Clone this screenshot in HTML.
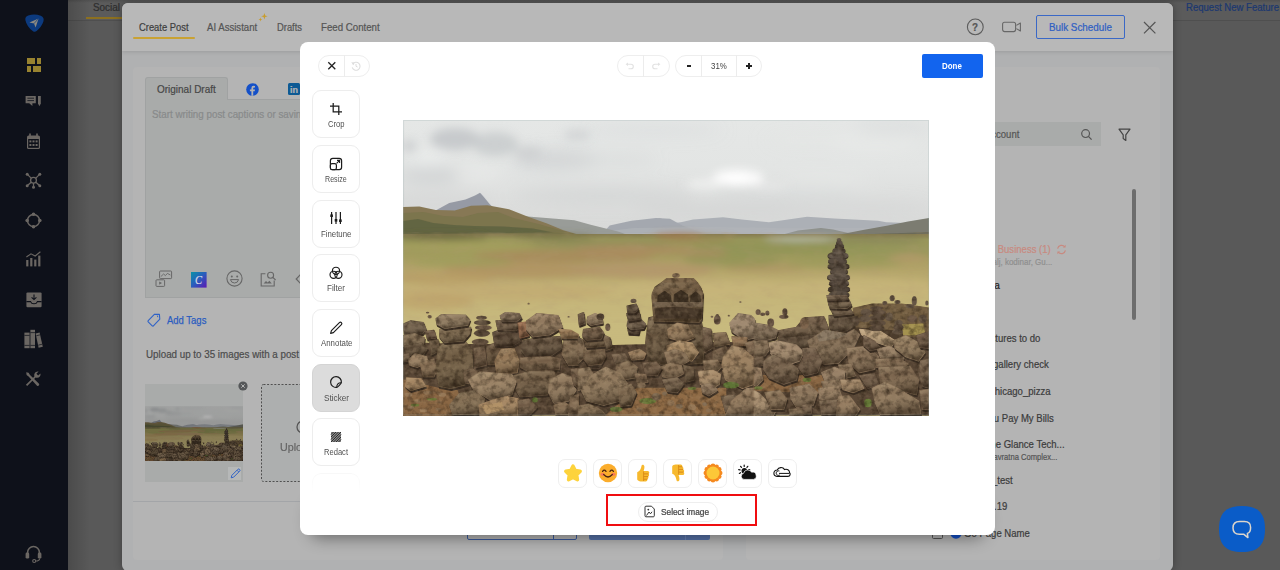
<!DOCTYPE html>
<html lang="en"><head><meta charset="utf-8"><title>Create Post</title>
<style>
*{box-sizing:border-box}
html,body{margin:0;padding:0}
body{width:1280px;height:570px;overflow:hidden;position:relative;background:#595959;font-family:"Liberation Sans",sans-serif}
.a{position:absolute}
.t{position:absolute;white-space:pre;transform-origin:0 50%;display:block;-webkit-text-stroke:.22px currentColor}
svg{position:absolute;overflow:visible}
#side{left:0;top:0;width:68px;height:570px;background:#0e111a}
#sideshadow{left:68px;top:0;width:22px;height:570px;background:linear-gradient(90deg,rgba(0,0,0,.16),rgba(0,0,0,0))}
#topbar{left:68px;top:0;width:1212px;height:21px;background:linear-gradient(#505050,#5b5b5b 3px);border-bottom:1px solid #4f4f4f}
#modal{left:122px;top:3px;width:1051px;height:567.5px;background:#b0b1b2;border-radius:6px;overflow:hidden;box-shadow:0 0 8px rgba(0,0,0,.3)}
#mhead{left:0;top:0;width:1051px;height:48px;background:#b8b8b8;box-shadow:0 1px 4px rgba(0,0,0,.12)}
.card{background:#b4b4b4;border-radius:4px}
#ed{left:300px;top:42px;width:695px;height:493px;background:#fff;border-radius:8px;}
.pill{border:1px solid #eee;border-radius:11px;height:22px;top:55px}
.tool{left:312px;width:48px;height:48px;border:1px solid #ededed;border-radius:9px;background:#fff}
.stk{top:459px;width:29px;height:29px;border:1px solid #efefef;border-radius:7px;background:#fff}
</style></head>
<body>
<div class="a" id="topbar"></div>
<div class="a" id="sideshadow"></div>
<span class="t" style="left:92.8px;top:0.9px;font-size:10.2px;line-height:14px;color:#2e2e2e;transform:scaleX(0.973);">Social</span>
<div class="a" style="left:86px;top:16.5px;width:40px;height:2.8px;background:#8c7020"></div>
<span class="t" style="left:1185.5px;top:1.4px;font-size:10px;line-height:14px;color:#1b3870;transform:scaleX(0.956);">Request New Feature</span>
<div class="a" id="side"></div>
<svg style="left:24px;top:14px" width="21" height="19" viewBox="0 0 21 19"><path d="M4.2 1.6Q10.4 -0.6 16.8 1.8Q20.6 3.4 19.4 7.6Q17.6 13 12.6 17Q10.8 18.4 9 17.2Q3 13 1.4 6.2Q0.8 2.8 4.2 1.6Z" fill="#0c3a7e"/><path d="M5.4 8.4L14.6 4.4L11.6 13.4L10 9.6Z" fill="#8d8a82"/><path d="M10 9.6L14.6 4.4" stroke="#0c3a7e" stroke-width=".7"/></svg>
<div class="a" style="left:26.5px;top:58px;width:8.6px;height:5.8px;background:#988330"></div><div class="a" style="left:37px;top:58px;width:4px;height:5.8px;background:#988330"></div><div class="a" style="left:26.5px;top:66.2px;width:4px;height:6.2px;background:#988330"></div><div class="a" style="left:32.6px;top:66.2px;width:8.4px;height:6.2px;background:#988330"></div>
<svg style="left:25px;top:95px" width="17" height="12" viewBox="0 0 17 12"><path d="M.6 1H10.8V8.2H7.4V11L4.2 8.2H.6Z" fill="#6b6763"/><path d="M2.4 3.2H9M2.4 5.6H9" stroke="#0e111a" stroke-width=".8"/><path d="M13 1H15.8V8.6L14.4 11.2L13 8.6Z" fill="#6b6763"/></svg>
<svg style="left:26px;top:133px" width="15" height="17" viewBox="0 0 15 17"><rect x="1" y="2.6" width="13" height="13.4" rx="1.6" fill="#6b6763"/><path d="M4 .6V3.4M11 .6V3.4" stroke="#6b6763" stroke-width="1.6"/><rect x="2.2" y="6" width="10.6" height="8.8" fill="#0e111a"/><g fill="#6b6763"><rect x="3.4" y="7.4" width="2" height="2"/><rect x="6.5" y="7.4" width="2" height="2"/><rect x="9.6" y="7.4" width="2" height="2"/><rect x="3.4" y="11" width="2" height="2"/><rect x="6.5" y="11" width="2" height="2"/><rect x="9.6" y="11" width="2" height="2"/></g></svg>
<svg style="left:25px;top:172px" width="17" height="17" viewBox="0 0 17 17"><g stroke="#6b6763" stroke-width="1.3" fill="none"><path d="M2.4 2.4L6.4 6.4M14.6 2.4L10.6 6.4M2.4 13.6L6.2 10.2M14.6 13.6L10.8 10.2M8.5 11V15"/><circle cx="8.5" cy="8.2" r="2.9"/></g><g fill="#6b6763"><circle cx="2.2" cy="2.2" r="1.5"/><circle cx="14.8" cy="2.2" r="1.5"/><circle cx="2.2" cy="13.8" r="1.5"/><circle cx="14.8" cy="13.8" r="1.5"/><circle cx="8.5" cy="15.2" r="1.5"/></g></svg>
<svg style="left:25px;top:211.5px" width="17" height="17" viewBox="0 0 17 17"><circle cx="8.5" cy="8.5" r="6" fill="none" stroke="#6b6763" stroke-width="1.5"/><g fill="#6b6763"><circle cx="8.5" cy="2.2" r="1.8"/><circle cx="8.5" cy="14.8" r="1.8"/><circle cx="2.2" cy="8.5" r="1.8"/><circle cx="14.8" cy="8.5" r="1.8"/></g></svg>
<svg style="left:25px;top:251px" width="17" height="16" viewBox="0 0 17 16"><g fill="#6b6763"><rect x="1.2" y="9" width="2.2" height="6.4"/><rect x="5.2" y="7" width="2.2" height="8.4"/><rect x="9.2" y="8.6" width="2.2" height="6.8"/><rect x="13.2" y="4.6" width="2.2" height="10.8"/></g><path d="M1.4 6L6 2.8L10.2 5L15.4 .8" fill="none" stroke="#6b6763" stroke-width="1.1"/></svg>
<svg style="left:25.5px;top:291.5px" width="16" height="16" viewBox="0 0 16 16"><rect x=".4" y=".4" width="15.2" height="14.8" rx="1.2" fill="#6b6763"/><path d="M8 2.4V7.4M5.6 5.4L8 7.6L10.4 5.4" stroke="#0e111a" stroke-width="1.1" fill="none"/><path d="M.4 9.6H4.6Q5.4 11.8 8 11.8Q10.6 11.8 11.4 9.6H15.6" stroke="#0e111a" stroke-width="1.1" fill="none"/></svg>
<svg style="left:23.5px;top:328.5px" width="19" height="20" viewBox="0 0 19 20"><g fill="#6b6763"><rect x=".4" y="3.6" width="5.2" height="15.6"/><rect x="6.4" y=".8" width="4.6" height="18.4"/><path d="M11.6 4.4L15.6 3.4L18.8 17.8L14.6 18.8Z"/></g><g stroke="#0e111a" stroke-width=".7"><path d="M.4 6.4H5.6M.4 16.4H5.6M6.4 3.6H11M6.4 16.4H11M12.2 6.8L16.2 5.8M14.2 16.2L18.2 15.2"/></g></svg>
<svg style="left:25px;top:370.5px" width="16" height="16" viewBox="0 0 16 16"><path d="M2.2 15L.9 13.7L9.4 5.4Q8.6 2.4 11 .9Q12.4 .2 13.6 .6L11.4 2.8L13.2 4.6L15.4 2.4Q15.8 3.8 15 5.2Q13.4 7.4 10.6 6.6Z" fill="#6b6763"/><path d="M1.2 1.2L3.6 1.8L5 4L13.8 12.4Q14.8 13.6 13.8 14.6Q12.8 15.4 11.8 14.4L3.6 5.4L1.6 4Z" fill="#6b6763"/></svg>
<svg style="left:25px;top:545px" width="17" height="18" viewBox="0 0 17 18"><path d="M2.6 10V7.4A5.9 5.9 0 0 1 14.4 7.4V10" fill="none" stroke="#6b6763" stroke-width="1.5"/><rect x=".6" y="7.6" width="3.6" height="6" rx="1.4" fill="#6b6763"/><rect x="12.8" y="7.6" width="3.6" height="6" rx="1.4" fill="#6b6763"/><path d="M14.6 13.4Q14.6 16 10.4 16" fill="none" stroke="#6b6763" stroke-width="1.1"/><circle cx="9.2" cy="16" r="1.5" fill="none" stroke="#6b6763" stroke-width="1.1"/></svg>
<div class="a" id="modal">
<div class="a" id="mhead"></div>
<div class="a card" style="left:11px;top:64px;width:590px;height:493px"></div>
<div class="a card" style="left:624px;top:64px;width:414px;height:493px"></div>
</div>
<span class="t" style="left:139.3px;top:19.5px;font-size:10.6px;line-height:15px;color:#3e3e3e;transform:scaleX(0.885);">Create Post</span>
<div class="a" style="left:133px;top:36.5px;width:62px;height:2.5px;border-radius:2px;background:#c9a233"></div>
<span class="t" style="left:207.3px;top:19.5px;font-size:10.6px;line-height:15px;color:#555;transform:scaleX(0.907);">AI Assistant</span>
<span class="t" style="left:276.8px;top:19.5px;font-size:10.6px;line-height:15px;color:#555;transform:scaleX(0.884);">Drafts</span>
<span class="t" style="left:320.8px;top:19.5px;font-size:10.6px;line-height:15px;color:#555;transform:scaleX(0.914);">Feed Content</span>
<svg style="left:966px;top:18px" width="18" height="18" viewBox="0 0 18 18"><circle cx="9.3" cy="8.9" r="7.9" fill="none" stroke="#5c5c5c" stroke-width="1.1"/></svg>
<span class="t" style="left:972.4px;top:19.7px;font-size:10.5px;line-height:15px;color:#555;font-weight:700;transform:scaleX(0.934);">?</span>
<svg style="left:1001px;top:20px" width="22" height="14" viewBox="0 0 22 14"><rect x="1.6" y="2.2" width="13" height="9.4" rx="2" fill="none" stroke="#676767" stroke-width="1.1"/><path d="M15.4 5.4L19.4 3V11L15.4 8.6" fill="none" stroke="#676767" stroke-width="1.1" stroke-linejoin="round"/></svg>
<div class="a" style="left:1036px;top:14.6px;width:89px;height:24.4px;border:1.3px solid #3a68c6;border-radius:2px"></div>
<span class="t" style="left:1048.9px;top:19.9px;font-size:10.8px;line-height:15px;color:#2f5fc3;transform:scaleX(0.911);">Bulk Schedule</span>
<svg style="left:1143px;top:21px" width="13" height="13" viewBox="0 0 13 13"><path d="M1 1L12.4 12.4M12.4 1L1 12.4" stroke="#555" stroke-width="1.2" fill="none"/></svg>
<svg style="left:258px;top:12px" width="10" height="10" viewBox="0 0 10 10"><path d="M6.4 1L7.2 3.4L9.6 4.2L7.2 5L6.4 7.4L5.6 5L3.2 4.2L5.6 3.4Z" fill="#c99d2b"/><path d="M2.4 5.6L2.9 7L4.3 7.5L2.9 8L2.4 9.4L1.9 8L.5 7.5L1.9 7Z" fill="#c99d2b"/></svg>
<div class="a" style="left:145px;top:99px;width:160px;height:198.5px;background:#a9abaa;border:1px solid #a0a2a2"></div>
<div class="a" style="left:145px;top:77px;width:83px;height:23px;background:#a9abaa;border:1px solid #a0a2a2;border-bottom:none;border-radius:3px 3px 0 0"></div>
<span class="t" style="left:157.2px;top:82.0px;font-size:10.8px;line-height:15px;color:#474747;transform:scaleX(0.924);">Original Draft</span>
<svg style="left:245.5px;top:82.5px" width="13" height="13" viewBox="0 0 13 13"><circle cx="6.5" cy="6.5" r="6.3" fill="#1450c8"/><path d="M7.2 12.7V8.2H8.7L9 6.4H7.2V5.3Q7.2 4.4 8.2 4.4H9V2.9Q8.4 2.8 7.6 2.8Q5.4 2.8 5.4 5V6.4H3.9V8.2H5.4V12.7Z" fill="#b4b4b4"/></svg>
<div class="a" style="left:288.3px;top:82.8px;width:12px;height:12px;background:#0d5a94;border-radius:1.5px"></div>
<span class="t" style="left:290.3px;top:82.8px;font-size:9.5px;line-height:13px;color:#b4b4b4;font-weight:700;transform:scaleX(0.946);">in</span>
<span class="t" style="left:152.0px;top:106.5px;font-size:10.8px;line-height:15px;color:#888a8a;transform:scaleX(0.908);">Start writing post captions or saving</span>
<svg style="left:155px;top:269.5px" width="18" height="18" viewBox="0 0 18 18"><rect x="4.6" y="1" width="12" height="7.6" rx=".8" fill="#a9abaa" stroke="#676767" stroke-width="1"/><path d="M5.8 6.6L8.6 4L10.4 5.6L12.4 3.4L15.4 5" fill="none" stroke="#676767" stroke-width=".9"/><rect x="1" y="9.8" width="8.6" height="6.6" rx=".8" fill="#a9abaa" stroke="#676767" stroke-width="1"/><path d="M4.2 11.4V14.8L7 13.1Z" fill="#676767"/></svg>
<svg style="left:191px;top:272px" width="16" height="16" viewBox="0 0 16 16"><defs><linearGradient id="cv" x1="0" y1="0" x2="1" y2="1"><stop offset="0" stop-color="#0a93a8"/><stop offset=".5" stop-color="#2b5bbd"/><stop offset="1" stop-color="#5c17b4"/></linearGradient></defs><rect width="15.6" height="15.6" fill="url(#cv)"/></svg>
<span class="t" style="left:195.2px;top:272.2px;font-size:11.5px;line-height:16px;color:#d8d8e4;transform:scaleX(0.914);font-style:italic;font-family:'Liberation Serif',serif;">C</span>
<svg style="left:225.5px;top:270.2px" width="17" height="17" viewBox="0 0 17 17"><circle cx="8.5" cy="8.5" r="7.6" fill="none" stroke="#676767" stroke-width="1.1"/><circle cx="5.8" cy="6.6" r="1" fill="#676767"/><circle cx="11.2" cy="6.6" r="1" fill="#676767"/><path d="M4.4 9.6H12.6Q11.8 13 8.5 13Q5.2 13 4.4 9.6Z" fill="none" stroke="#676767" stroke-width="1"/></svg>
<svg style="left:260px;top:270.5px" width="17" height="16" viewBox="0 0 17 16"><path d="M5.4 2.8H1.2V15H14.2V9.4" fill="none" stroke="#676767" stroke-width="1.1"/><circle cx="10.6" cy="4.2" r="3" fill="none" stroke="#676767" stroke-width="1.1"/><path d="M12.8 6.4L15.6 9" stroke="#676767" stroke-width="1.2"/><path d="M3.6 12.6L6 10L7.6 11.6L9.4 9.8L11.8 12.6Z" fill="#676767"/></svg>
<svg style="left:294px;top:273px" width="8" height="12" viewBox="0 0 8 12"><path d="M6.4 1.6L2.2 6L6.4 10.4" fill="none" stroke="#676767" stroke-width="1.2"/></svg>
<svg style="left:147px;top:313px" width="14" height="14" viewBox="0 0 14 14"><path d="M7.6 1.2L12.4 1.4L12.8 6.2L6.4 12.8Q5.8 13.4 5.2 12.8L1.2 8.8Q.6 8.2 1.2 7.6Z" fill="none" stroke="#2f62c6" stroke-width="1.1" stroke-linejoin="round"/><path d="M10.4 2.6L10.8 4.2" stroke="#2f62c6" stroke-width="1"/></svg>
<span class="t" style="left:166.6px;top:312.0px;font-size:11.4px;line-height:16px;color:#2a5cc0;transform:scaleX(0.833);-webkit-text-stroke:.25px #2a5cc0;">Add Tags</span>
<span class="t" style="left:145.6px;top:346.5px;font-size:10.8px;line-height:15px;color:#4c4c4c;transform:scaleX(0.907);">Upload up to 35 images with a post</span>
<div class="a" style="left:145px;top:384.4px;width:98.3px;height:98px;background:#a9abaa"></div>
<svg style="left:145px;top:406px;overflow:hidden" width="98.3" height="55.3" viewBox="0 0 526 295.4"><use href="#photoG"/><rect width="526" height="296" fill="#000" opacity=".3"/></svg>
<svg style="left:237.8px;top:380.5px" width="10" height="10" viewBox="0 0 10 10"><circle cx="5" cy="5" r="4.6" fill="#555759"/><path d="M3.3 3.3L6.7 6.7M6.7 3.3L3.3 6.7" stroke="#b4b4b4" stroke-width="1"/></svg>
<div class="a" style="left:228.4px;top:467px;width:12.8px;height:12.6px;background:#b6b8b8"></div>
<svg style="left:229.6px;top:468px" width="11" height="11" viewBox="0 0 11 11"><path d="M1.2 9.8L1.8 7.4L7.8 1.4A1.1 1.1 0 0 1 9.6 3.2L3.6 9.2Z" fill="none" stroke="#2f62c6" stroke-width="1" stroke-linejoin="round"/><path d="M7 2.2L8.8 4" stroke="#2f62c6" stroke-width=".9"/></svg>
<svg style="left:261.3px;top:384.4px" width="60" height="98" viewBox="0 0 60 98"><rect x=".5" y=".5" width="70" height="97" rx="2" fill="#adafaf" stroke="#505050" stroke-width="1" stroke-dasharray="2 1.6"/></svg>
<span class="t" style="left:280.4px;top:439.8px;font-size:11.2px;line-height:15px;color:#666;transform:scaleX(0.959);">Upload</span>
<svg style="left:295px;top:420px" width="14" height="14" viewBox="0 0 14 14"><circle cx="8" cy="7" r="6" fill="none" stroke="#555" stroke-width="1.3"/></svg>
<div class="a" style="left:133px;top:500.5px;width:589px;height:1.5px;background:#a3a5a8"></div>
<div class="a" style="left:467.4px;top:515px;width:109.4px;height:24.6px;border:1.2px solid #3d5c9c;border-radius:2px"></div><div class="a" style="left:553px;top:515px;width:1.2px;height:24px;background:#3d5c9c"></div>
<div class="a" style="left:589.3px;top:515px;width:121px;height:24.6px;background:#5672a8;border-radius:2px"></div><div class="a" style="left:684.6px;top:515px;width:1px;height:24.6px;background:#6a84b6"></div>
<div class="a" style="left:900px;top:122.3px;width:200.7px;height:23.7px;background:#a9abaa"></div>
<span class="t" style="left:952.9px;top:126.8px;font-size:10.8px;line-height:15px;color:#555;transform:scaleX(0.885);">Search account</span>
<svg style="left:1079.5px;top:128px" width="13" height="13" viewBox="0 0 13 13"><circle cx="5.6" cy="5.6" r="3.9" fill="none" stroke="#555" stroke-width="1.2"/><path d="M8.4 8.4L11.6 11.6" stroke="#555" stroke-width="1.3"/></svg>
<svg style="left:1118px;top:127.5px" width="13" height="14" viewBox="0 0 13 14"><path d="M1 1.2H12L7.8 6.8V12.4L5.2 10.6V6.8Z" fill="none" stroke="#444" stroke-width="1.2" stroke-linejoin="round"/></svg>
<div class="a" style="left:1132.3px;top:189.3px;width:3.8px;height:130.4px;border-radius:2px;background:#6d6d6d"></div>
<span class="t" style="left:952.4px;top:241.8px;font-size:10.8px;line-height:15px;color:#c88a80;transform:scaleX(0.885);">My Listing Business (1)</span>
<svg style="left:1056.2px;top:243.6px" width="11" height="11" viewBox="0 0 11 11"><path d="M1.6 4.6A4 4 0 0 1 8.8 3M9.4 6.4A4 4 0 0 1 2.2 8" fill="none" stroke="#c88a80" stroke-width="1.2"/><path d="M9.6 .8V3.6H6.8ZM1.4 10.2V7.4H4.2Z" fill="#c88a80"/></svg>
<span class="t" style="left:881.0px;top:255.8px;font-size:9px;line-height:13px;color:#8f8f8f;transform:scaleX(0.885);">Unnamed Road, Rampara, Devalj, kodinar, Gu...</span>
<span class="t" style="left:979.3px;top:277.5px;font-size:10.8px;line-height:15px;color:#222;transform:scaleX(0.885);">India</span>
<span class="t" style="left:981.8px;top:330.7px;font-size:10.8px;line-height:15px;color:#3c3c3c;transform:scaleX(0.885);">Pictures to do</span>
<span class="t" style="left:992.5px;top:356.9px;font-size:10.8px;line-height:15px;color:#3c3c3c;transform:scaleX(0.885);">gallery check</span>
<span class="t" style="left:990.4px;top:383.9px;font-size:10.8px;line-height:15px;color:#3c3c3c;transform:scaleX(0.885);">chicago_pizza</span>
<span class="t" style="left:983.2px;top:410.5px;font-size:10.8px;line-height:15px;color:#3c3c3c;transform:scaleX(0.885);">You Pay My Bills</span>
<span class="t" style="left:972.9px;top:436.7px;font-size:10.8px;line-height:15px;color:#3c3c3c;transform:scaleX(0.885);">At The Glance Tech...</span>
<span class="t" style="left:984.1px;top:472.5px;font-size:10.8px;line-height:15px;color:#3c3c3c;transform:scaleX(0.885);">fb_test</span>
<span class="t" style="left:984.1px;top:498.9px;font-size:10.8px;line-height:15px;color:#3c3c3c;transform:scaleX(0.885);">v1.19</span>
<span class="t" style="left:987.7px;top:451.2px;font-size:8.6px;line-height:12px;color:#555;transform:scaleX(0.885);">Navratna Complex...</span>
<div class="a" style="left:931.5px;top:527.5px;width:11.5px;height:11.5px;border:1.2px solid #555;border-radius:1.5px"></div>
<svg style="left:949.5px;top:527px" width="12" height="12" viewBox="0 0 12 12"><circle cx="6" cy="6" r="5.8" fill="#1450c8"/></svg>
<span class="t" style="left:964.4px;top:525.5px;font-size:10.8px;line-height:15px;color:#3c3c3c;transform:scaleX(0.885);">Go Page Name</span>
<div class="a" style="left:312px;top:495px;width:671px;height:32px;border-radius:8px;box-shadow:0 9px 16px 2px rgba(0,0,0,.42)"></div>
<div class="a" id="ed"></div>
<div class="a pill" style="left:318px;width:52px"></div><div class="a" style="left:344px;top:55px;width:1px;height:22px;background:#ececec"></div>
<svg style="left:326px;top:60px" width="12" height="12" viewBox="0 0 12 12"><path d="M2.3 2.3L9.3 9.3M9.3 2.3L2.3 9.3" stroke="#222" stroke-width="1.3" fill="none"/></svg>
<svg style="left:350px;top:60px" width="12" height="12" viewBox="0 0 12 12"><path d="M2.6 4.2A4 4 0 1 1 2.2 7.4" stroke="#ddd" stroke-width="1.1" fill="none"/><path d="M1.2 2.2L3.6 5.2L4.6 2.6Z" fill="#ddd"/><path d="M6 4V6.3L7.6 7" stroke="#ddd" stroke-width="1" fill="none"/></svg>
<div class="a pill" style="left:617px;width:53px"></div><div class="a" style="left:642.5px;top:55px;width:1px;height:22px;background:#ececec"></div>
<svg style="left:624px;top:60px" width="12" height="12" viewBox="0 0 12 12"><path d="M3 4.2H7A2.3 2.3 0 0 1 7 8.8H4.5" stroke="#e2e2e2" stroke-width="1.1" fill="none"/><path d="M1.6 4.2L4 2.4V6Z" fill="#e2e2e2"/></svg>
<svg style="left:650px;top:60px" width="12" height="12" viewBox="0 0 12 12"><path d="M9 4.2H5A2.3 2.3 0 0 0 5 8.8H7.5" stroke="#e2e2e2" stroke-width="1.1" fill="none"/><path d="M10.4 4.2L8 2.4V6Z" fill="#e2e2e2"/></svg>
<div class="a pill" style="left:675px;width:87px"></div><div class="a" style="left:701px;top:55px;width:1px;height:22px;background:#ececec"></div><div class="a" style="left:736px;top:55px;width:1px;height:22px;background:#ececec"></div>
<div class="a" style="left:686.5px;top:65px;width:4.5px;height:1.8px;background:#222"></div>
<div class="a" style="left:746px;top:65.2px;width:6px;height:1.6px;background:#222"></div><div class="a" style="left:748.2px;top:63px;width:1.6px;height:6px;background:#222"></div>
<span class="t" style="left:711.0px;top:60.2px;font-size:9.2px;line-height:13px;color:#444;transform:scaleX(0.859);-webkit-text-stroke:0;">31%</span>
<div class="a" style="left:922px;top:54px;width:61px;height:24px;border-radius:2px;background:#1264ee"></div>
<span class="t" style="left:942.3px;top:60.0px;font-size:9.3px;line-height:13px;color:#fff;font-weight:700;transform:scaleX(0.852);-webkit-text-stroke:0;">Done</span>
<div class="a tool" style="top:90.3px"></div>
<span class="t" style="left:328.1px;top:119.4px;font-size:8.2px;line-height:12px;color:#505050;transform:scaleX(0.930);-webkit-text-stroke:0;">Crop</span>
<div class="a tool" style="top:145.0px"></div>
<span class="t" style="left:325.4px;top:174.1px;font-size:8.2px;line-height:12px;color:#505050;transform:scaleX(0.867);-webkit-text-stroke:0;">Resize</span>
<div class="a tool" style="top:199.7px"></div>
<span class="t" style="left:321.1px;top:228.8px;font-size:8.2px;line-height:12px;color:#505050;transform:scaleX(0.954);-webkit-text-stroke:0;">Finetune</span>
<div class="a tool" style="top:254.3px"></div>
<span class="t" style="left:327.3px;top:283.4px;font-size:8.2px;line-height:12px;color:#505050;transform:scaleX(0.989);-webkit-text-stroke:0;">Filter</span>
<div class="a tool" style="top:309.0px"></div>
<span class="t" style="left:320.6px;top:338.1px;font-size:8.2px;line-height:12px;color:#505050;transform:scaleX(0.961);-webkit-text-stroke:0;">Annotate</span>
<div class="a tool" style="top:363.7px;background:#dcdcdc;border-color:#d4d4d4"></div>
<span class="t" style="left:323.8px;top:392.8px;font-size:8.2px;line-height:12px;color:#505050;transform:scaleX(0.999);-webkit-text-stroke:0;">Sticker</span>
<div class="a tool" style="top:418.3px"></div>
<span class="t" style="left:324.3px;top:447.4px;font-size:8.2px;line-height:12px;color:#505050;transform:scaleX(0.925);-webkit-text-stroke:0;">Redact</span>
<div class="a tool" style="top:473px;border-color:#f8f8f8;-webkit-mask-image:linear-gradient(#000,transparent 40%);mask-image:linear-gradient(#000,transparent 40%)"></div>
<svg style="left:329.2px;top:102.0px" width="14" height="14" viewBox="0 0 14 14"><path d="M4.2 1V9.8H13M1 4.2H9.8V13" fill="none" stroke="#1c1c1c" stroke-width="1.25"/></svg>
<svg style="left:329.2px;top:156.7px" width="14" height="14" viewBox="0 0 14 14"><rect x="1.4" y="1.4" width="11.2" height="11.2" rx="2.4" fill="none" stroke="#1c1c1c" stroke-width="1.2"/><rect x="1.4" y="6.6" width="6" height="6" rx="1.6" fill="#fff" stroke="#1c1c1c" stroke-width="1.2"/><path d="M7.6 6.4L10.4 3.6M8 3.4H10.6V6" fill="none" stroke="#1c1c1c" stroke-width="1.1"/></svg>
<svg style="left:329.2px;top:211.4px" width="14" height="14" viewBox="0 0 14 14"><path d="M2.6 1V13M7 1V13M11.4 1V13" stroke="#1c1c1c" stroke-width="1.2"/><rect x="1.3" y="3.4" width="2.6" height="2.6" fill="#1c1c1c"/><rect x="5.7" y="8" width="2.6" height="2.6" fill="#1c1c1c"/><rect x="10.1" y="8.4" width="2.6" height="2.6" fill="#1c1c1c"/></svg>
<svg style="left:329.2px;top:266.0px" width="14" height="14" viewBox="0 0 14 14"><circle cx="7" cy="4.8" r="3.6" fill="none" stroke="#1c1c1c" stroke-width="1.15"/><circle cx="4.6" cy="8.8" r="3.6" fill="none" stroke="#1c1c1c" stroke-width="1.15"/><circle cx="9.4" cy="8.8" r="3.6" fill="none" stroke="#1c1c1c" stroke-width="1.15"/></svg>
<svg style="left:329.2px;top:320.7px" width="14" height="14" viewBox="0 0 14 14"><path d="M1.6 12.4L2.4 9.6L10.4 1.6A1.3 1.3 0 0 1 12.4 3.6L4.4 11.6Z" fill="none" stroke="#1c1c1c" stroke-width="1.15" stroke-linejoin="round"/></svg>
<svg style="left:329.2px;top:375.4px" width="14" height="14" viewBox="0 0 14 14"><path d="M12.4 7.6A5.4 5.4 0 1 0 7.6 12.4C8.4 12.4 12.4 8.6 12.4 7.6Z" fill="none" stroke="#1c1c1c" stroke-width="1.2"/><path d="M7.8 12.2C7.6 9.6 9.4 7.6 12.2 7.8" fill="none" stroke="#1c1c1c" stroke-width="1.1"/></svg>
<svg style="left:329.2px;top:430.0px" width="14" height="14" viewBox="0 0 14 14"><g transform="translate(2,2)"><rect width="10" height="10" fill="#888"/><path d="M2.5 0L0 2.5" stroke="#222" stroke-width=".9"/><path d="M5 0L0 5" stroke="#222" stroke-width=".9"/><path d="M7.5 0L0 7.5" stroke="#222" stroke-width=".9"/><path d="M10 0L0 10" stroke="#222" stroke-width=".9"/><path d="M10 2.5L2.5 10" stroke="#222" stroke-width=".9"/><path d="M10 5L5 10" stroke="#222" stroke-width=".9"/><path d="M10 7.5L7.5 10" stroke="#222" stroke-width=".9"/></g></svg>
<svg style="left:402.7px;top:120.3px;overflow:hidden" width="526" height="295.4" viewBox="0 0 526 295.4">
<defs>
<linearGradient id="sky" x1="0" y1="0" x2="0" y2="1"><stop offset="0" stop-color="#e5e7e6"/><stop offset=".4" stop-color="#e3e5e4"/><stop offset=".75" stop-color="#dcdddc"/><stop offset="1" stop-color="#d6d7d6"/></linearGradient>
<linearGradient id="gnd" x1="0" y1="0" x2="0" y2="1"><stop offset="0" stop-color="#857a50"/><stop offset=".03" stop-color="#98955a"/><stop offset=".12" stop-color="#a39c5e"/><stop offset=".2" stop-color="#b4a56a"/><stop offset=".3" stop-color="#c4b478"/><stop offset=".5" stop-color="#c8ba7e"/><stop offset="1" stop-color="#c6b87e"/></linearGradient>
<linearGradient id="shade" x1="0" y1="0" x2="0.25" y2="1"><stop offset="0" stop-color="#f0dcb4" stop-opacity=".3"/><stop offset=".4" stop-color="#f0dcb4" stop-opacity="0"/><stop offset="1" stop-color="#140c04" stop-opacity=".42"/></linearGradient>
<filter id="b1" x="-10%" y="-10%" width="120%" height="120%"><feGaussianBlur stdDeviation="1"/></filter>
<filter id="b3" x="-30%" y="-30%" width="160%" height="160%"><feGaussianBlur stdDeviation="3.5"/></filter>
<filter id="b5" x="-40%" y="-40%" width="180%" height="180%"><feGaussianBlur stdDeviation="5"/></filter>
<filter id="b8" x="-50%" y="-50%" width="200%" height="200%"><feGaussianBlur stdDeviation="8"/></filter>
<filter id="bs" x="-5%" y="-5%" width="110%" height="110%"><feGaussianBlur stdDeviation=".55"/></filter>
<filter id="rockfx" x="0" y="0" width="100%" height="100%" color-interpolation-filters="sRGB"><feGaussianBlur in="SourceGraphic" stdDeviation=".5" result="src"/><feTurbulence type="fractalNoise" baseFrequency=".16" numOctaves="3" seed="7" result="n1"/><feColorMatrix in="n1" values="0 0 0 0 .13  0 0 0 0 .09  0 0 0 0 .05  1.3 0 0 0 -.56" result="d"/><feComposite in="d" in2="src" operator="in" result="d2"/><feTurbulence type="fractalNoise" baseFrequency=".2" numOctaves="2" seed="21" result="n2"/><feColorMatrix in="n2" values="0 0 0 0 .74  0 0 0 0 .65  0 0 0 0 .52  0 .55 0 0 -.27" result="l"/><feComposite in="l" in2="src" operator="in" result="l2"/><feMerge><feMergeNode in="src"/><feMergeNode in="d2"/><feMergeNode in="l2"/></feMerge></filter>
<filter id="tex2" x="0" y="0" width="100%" height="100%"><feTurbulence type="fractalNoise" baseFrequency=".05 .12" numOctaves="3" seed="3"/><feColorMatrix values="0 0 0 0 .45  0 0 0 0 .32  0 0 0 0 .18  1.8 0 0 0 -.8"/></filter>
<clipPath id="rc"><polygon points="0,192 60,192 60,206 90,190 160,192 165,204 180,192 205,192 210,204 222,180 240,180 245,158 300,158 302,200 330,196 352,205 420,208 424,120 450,120 452,190 526,178 526,295.4 0,295.4"/></clipPath>
</defs>
<g id="photoG">
<rect width="526" height="118" fill="url(#sky)"/>
<g filter="url(#b8)"><ellipse cx="30" cy="55" rx="34" ry="9" fill="#cdd0d1" opacity="0.8"/><ellipse cx="152" cy="40" rx="44" ry="10" fill="#cfd2d3" opacity="0.8"/><ellipse cx="250" cy="10" rx="70" ry="5" fill="#d6d9da" opacity="0.6"/><ellipse cx="215" cy="40" rx="40" ry="6" fill="#d4d7d8" opacity="0.5"/><ellipse cx="26" cy="38" rx="20" ry="8" fill="#eceeed" opacity="0.9"/><ellipse cx="75" cy="53" rx="26" ry="7" fill="#e8eae9" opacity="0.8"/><ellipse cx="420" cy="58" rx="50" ry="7" fill="#e8e9e8" opacity="0.6"/><ellipse cx="470" cy="22" rx="45" ry="10" fill="#eaebea" opacity="0.6"/><ellipse cx="400" cy="20" rx="40" ry="8" fill="#e6e7e6" opacity="0.5"/><ellipse cx="30" cy="82" rx="60" ry="8" fill="#d4d6d6" opacity="0.7"/><ellipse cx="200" cy="76" rx="90" ry="9" fill="#d2d4d4" opacity="0.7"/><ellipse cx="330" cy="90" rx="100" ry="7" fill="#d0d2d2" opacity="0.7"/><ellipse cx="470" cy="88" rx="60" ry="7" fill="#d3d5d5" opacity="0.6"/><ellipse cx="490" cy="8" rx="40" ry="6" fill="#d6d9da" opacity="0.7"/><ellipse cx="380" cy="74" rx="70" ry="6" fill="#d6d8d8" opacity="0.6"/></g>
<g filter="url(#b5)"><ellipse cx="52" cy="19" rx="25" ry="11" fill="#c4c7ca" opacity="0.9"/><ellipse cx="92" cy="24" rx="23" ry="12" fill="#c8cbcd" opacity="0.85"/><ellipse cx="174" cy="15" rx="14" ry="6" fill="#cfd2d3" opacity="0.8"/><ellipse cx="6" cy="26" rx="8" ry="6" fill="#c8cbcd" opacity="0.8"/><ellipse cx="125" cy="33" rx="14" ry="7" fill="#cacdcf" opacity="0.7"/><ellipse cx="335" cy="58" rx="26" ry="8" fill="#fbfbfb" opacity="1"/><ellipse cx="330" cy="57" rx="16" ry="5" fill="#ffffff" opacity="0.9"/><ellipse cx="303" cy="64" rx="20" ry="5" fill="#f0f1f0" opacity="0.9"/><ellipse cx="366" cy="66" rx="20" ry="4" fill="#e9eae9" opacity="0.7"/></g>
<g filter="url(#bs)">
<polygon fill="#acb0b6" points="190.0,113.0 257.0,98.0 268.0,103.5 279.0,102.0 290.0,99.4 320.0,97.3 339.0,99.4 366.0,102.2 385.0,99.4 404.0,96.7 431.0,98.6 475.0,100.8 483.0,102.2 526.0,104.0 526.0,118.0 190.0,118.0"/>
<polygon fill="#a4a8af" points="200.0,113.0 206.6,105.6 228.4,100.7 252.9,98.0 267.0,98.8 280.0,106.0 300.0,113.0"/>
<polygon fill="#b3b6b9" opacity=".6" points="190.0,113.0 230.0,108.0 300.0,107.0 400.0,108.0 500.0,108.0 526.0,109.0 526.0,118.0 190.0,118.0"/>
<polygon fill="#969aa4" points="28.0,93.0 32.6,90.4 46.2,83.0 62.5,79.5 72.0,75.5 77.0,72.7 80.2,76.3 87.0,84.4 95.0,92.0 60.0,96.0"/>
<polygon fill="#999c98" points="120.0,96.0 127.8,96.7 149.5,98.6 171.3,100.2 187.6,104.8 214.8,111.6 222.0,114.0 120.0,116.0"/>
<polygon fill="#877855" points="0.0,87.1 16.3,86.6 32.6,89.9 51.7,90.4 68.0,85.8 84.3,85.2 106.0,89.3 125.0,96.7 144.0,103.4 160.4,110.2 175.0,114.5 0.0,115.5"/>
<polygon fill="#737248" opacity=".6" points="0.0,93.0 20.0,92.0 40.0,96.0 60.0,97.0 75.0,93.0 95.0,92.0 110.0,98.0 135.0,104.0 160.0,111.0 175.0,115.0 0.0,115.5"/>
<polygon fill="#5c6240" opacity=".8" points="0.0,101.0 15.0,99.0 30.0,103.0 50.0,105.0 70.0,106.0 100.0,106.5 130.0,108.5 150.0,112.5 0.0,114.0"/>
<polygon fill="#8e918c" points="380.0,114.5 395.0,110.5 417.8,108.0 430.0,109.5 445.0,113.0 445.0,116.0 380.0,116.0"/>
<polygon fill="#7b7c71" points="437.0,114.5 460.0,110.0 485.0,105.5 505.0,101.5 526.0,98.0 526.0,118.0 437.0,118.0"/>
<polygon fill="#6b6a58" points="430.0,115.5 526.0,112.0 526.0,119.0 430.0,119.0"/>
</g>
<rect y="114" width="526" height="182" fill="url(#gnd)"/>
<g filter="url(#b3)"><ellipse cx="40" cy="117.5" rx="45" ry="3" fill="#5e5a3a" opacity="0.8"/><ellipse cx="150" cy="117" rx="40" ry="2.5" fill="#6a6840" opacity="0.7"/><ellipse cx="275" cy="116" rx="24" ry="2.5" fill="#a87550" opacity="0.9"/><ellipse cx="300" cy="119" rx="30" ry="3" fill="#9a8352" opacity="0.7"/><ellipse cx="400" cy="118.5" rx="40" ry="1.6" fill="#c6cace" opacity="0.95"/><ellipse cx="392" cy="122" rx="14" ry="1" fill="#c0c4c8" opacity="0.8"/><ellipse cx="470" cy="120" rx="50" ry="2" fill="#6f6c58" opacity="0.6"/><ellipse cx="60" cy="126" rx="70" ry="5" fill="#a5a25e" opacity="0.7"/><ellipse cx="200" cy="124" rx="70" ry="4" fill="#8f8c58" opacity="0.7"/><ellipse cx="380" cy="128" rx="90" ry="7" fill="#8e9355" opacity="0.8"/><ellipse cx="480" cy="130" rx="50" ry="7" fill="#929558" opacity="0.7"/><ellipse cx="330" cy="140" rx="50" ry="6" fill="#8e9355" opacity="0.7"/><ellipse cx="440" cy="142" rx="60" ry="6" fill="#969858" opacity="0.6"/><ellipse cx="160" cy="136" rx="90" ry="6" fill="#a88a5c" opacity="0.85"/><ellipse cx="230" cy="130" rx="60" ry="5" fill="#ad8c60" opacity="0.8"/><ellipse cx="120" cy="150" rx="80" ry="8" fill="#b09262" opacity="0.8"/><ellipse cx="240" cy="150" rx="70" ry="8" fill="#b3966a" opacity="0.8"/><ellipse cx="60" cy="142" rx="50" ry="5" fill="#9a9c58" opacity="0.6"/><ellipse cx="40" cy="158" rx="50" ry="7" fill="#b89a64" opacity="0.6"/><ellipse cx="300" cy="133" rx="25" ry="4" fill="#a88d60" opacity="0.8"/><ellipse cx="360" cy="148" rx="40" ry="3" fill="#a88d60" opacity="0.6"/><ellipse cx="505" cy="138" rx="20" ry="5" fill="#b89a6c" opacity="0.6"/><ellipse cx="100" cy="172" rx="110" ry="9" fill="#c2aa72" opacity="0.7"/><ellipse cx="300" cy="170" rx="100" ry="10" fill="#c6b47a" opacity="0.6"/><ellipse cx="460" cy="168" rx="70" ry="10" fill="#c8b67c" opacity="0.6"/><ellipse cx="30" cy="182" rx="40" ry="8" fill="#bd9e68" opacity="0.6"/></g>
<rect y="112.5" width="526" height="90" filter="url(#tex2)" opacity=".25"/>
<g filter="url(#rockfx)">
<polygon fill="#5a4837" points="0,222 60,224 120,224 176,226 250,224 300,222 352,222 420,224 470,220 526,214 526,295.4 0,295.4"/>
<ellipse cx="436" cy="120.7" rx="2.2" ry="1.6" fill="#3a3027"/>
<ellipse cx="436" cy="119.5" rx="2.2" ry="1.6" fill="#62564a"/>
<ellipse cx="436.3" cy="123.7" rx="3.2" ry="1.8" fill="#3a3027"/>
<ellipse cx="436.3" cy="122.5" rx="3.2" ry="1.8" fill="#574b40"/>
<ellipse cx="436.5" cy="127.2" rx="4.5" ry="2.2" fill="#3a3027"/>
<ellipse cx="436.5" cy="126" rx="4.5" ry="2.2" fill="#4e4338"/>
<ellipse cx="436" cy="131.7" rx="6.5" ry="3" fill="#3a3027"/>
<ellipse cx="436" cy="130.5" rx="6.5" ry="3" fill="#5a4e42"/>
<ellipse cx="435" cy="136.7" rx="10.5" ry="3.8" fill="#3a3027"/>
<ellipse cx="435" cy="135.5" rx="10.5" ry="3.8" fill="#62564a"/>
<ellipse cx="434.5" cy="142.2" rx="9.5" ry="3.4" fill="#3a3027"/>
<ellipse cx="434.5" cy="141" rx="9.5" ry="3.4" fill="#574b40"/>
<ellipse cx="435.5" cy="147.2" rx="11" ry="3.6" fill="#3a3027"/>
<ellipse cx="435.5" cy="146" rx="11" ry="3.6" fill="#4e4338"/>
<ellipse cx="436" cy="152.7" rx="9" ry="3.4" fill="#3a3027"/>
<ellipse cx="436" cy="151.5" rx="9" ry="3.4" fill="#5a4e42"/>
<ellipse cx="435.5" cy="158.2" rx="11.5" ry="4" fill="#3a3027"/>
<ellipse cx="435.5" cy="157" rx="11.5" ry="4" fill="#62564a"/>
<ellipse cx="436" cy="164.2" rx="10" ry="3.8" fill="#3a3027"/>
<ellipse cx="436" cy="163" rx="10" ry="3.8" fill="#574b40"/>
<ellipse cx="436" cy="170.2" rx="11" ry="4" fill="#3a3027"/>
<ellipse cx="436" cy="169" rx="11" ry="4" fill="#4e4338"/>
<ellipse cx="436" cy="175.7" rx="10.5" ry="3.5" fill="#3a3027"/>
<ellipse cx="436" cy="174.5" rx="10.5" ry="3.5" fill="#5a4e42"/>
<g transform="translate(-0.7,175.7) scale(.2105)">
<polygon points="0,400 170,440 260,450 300,570 0,570" fill="#8a6744" stroke="#8a6744" stroke-width="6" stroke-linejoin="round"/>
<polygon points="8,144 43,129 103,137 115,169 98,189 13,191" fill="#3a2e23" stroke="#3a2e23" stroke-width="7" stroke-linejoin="round"/>
<polygon points="5,135 40,120 100,128 112,160 95,180 10,182" fill="#705f4c" stroke="#705f4c" stroke-width="6" stroke-linejoin="round"/>
<polygon points="5,135 40,120 100,128 112,160 95,180 10,182" fill="url(#shade)"/>
<polygon points="8,199 63,189 108,209 103,244 33,257 8,249" fill="#3a2e23" stroke="#3a2e23" stroke-width="7" stroke-linejoin="round"/>
<polygon points="5,190 60,180 105,200 100,235 30,248 5,240" fill="#7c6850" stroke="#7c6850" stroke-width="6" stroke-linejoin="round"/>
<polygon points="5,190 60,180 105,200 100,235 30,248 5,240" fill="url(#shade)"/>
<polygon points="13,249 93,234 123,259 103,289 23,294" fill="#3a2e23" stroke="#3a2e23" stroke-width="7" stroke-linejoin="round"/>
<polygon points="10,240 90,225 120,250 100,280 20,285" fill="#5d4c3a" stroke="#5d4c3a" stroke-width="6" stroke-linejoin="round"/>
<polygon points="10,240 90,225 120,250 100,280 20,285" fill="url(#shade)"/>
<polygon points="3,289 33,284 38,319 3,324" fill="#3a2e23" stroke="#3a2e23" stroke-width="7" stroke-linejoin="round"/>
<polygon points="0,280 30,275 35,310 0,315" fill="#6c5845" stroke="#6c5845" stroke-width="6" stroke-linejoin="round"/>
<polygon points="0,280 30,275 35,310 0,315" fill="url(#shade)"/>
<polygon points="33,314 63,284 118,299 128,329 73,349 38,339" fill="#3a2e23" stroke="#3a2e23" stroke-width="7" stroke-linejoin="round"/>
<polygon points="30,305 60,275 115,290 125,320 70,340 35,330" fill="#987f63" stroke="#987f63" stroke-width="6" stroke-linejoin="round"/>
<polygon points="30,305 60,275 115,290 125,320 70,340 35,330" fill="url(#shade)"/>
<polygon points="88,329 153,309 168,359 153,394 103,394" fill="#3a2e23" stroke="#3a2e23" stroke-width="7" stroke-linejoin="round"/>
<polygon points="85,320 150,300 165,350 150,385 100,385" fill="#846c52" stroke="#846c52" stroke-width="6" stroke-linejoin="round"/>
<polygon points="85,320 150,300 165,350 150,385 100,385" fill="url(#shade)"/>
<polygon points="23,399 93,404 113,439 43,459 18,439" fill="#3a2e23" stroke="#3a2e23" stroke-width="7" stroke-linejoin="round"/>
<polygon points="20,390 90,395 110,430 40,450 15,430" fill="#a0815e" stroke="#a0815e" stroke-width="6" stroke-linejoin="round"/>
<polygon points="20,390 90,395 110,430 40,450 15,430" fill="url(#shade)"/>
<polygon points="113,179 153,174 163,209 123,214" fill="#3a2e23" stroke="#3a2e23" stroke-width="7" stroke-linejoin="round"/>
<polygon points="110,170 150,165 160,200 120,205" fill="#6c5744" stroke="#6c5744" stroke-width="6" stroke-linejoin="round"/>
<polygon points="110,170 150,165 160,200 120,205" fill="url(#shade)"/>
<polygon points="133,224 173,219 178,269 143,289" fill="#3a2e23" stroke="#3a2e23" stroke-width="7" stroke-linejoin="round"/>
<polygon points="130,215 170,210 175,260 140,280" fill="#64523e" stroke="#64523e" stroke-width="6" stroke-linejoin="round"/>
<polygon points="130,215 170,210 175,260 140,280" fill="url(#shade)"/>
<polygon points="173,259 203,231 303,227 333,269 338,339 313,429 233,449 178,439 163,359" fill="#3a2e23" stroke="#3a2e23" stroke-width="7" stroke-linejoin="round"/>
<polygon points="170,250 200,222 300,218 330,260 335,330 310,420 230,440 175,430 160,350" fill="#6e5b43" stroke="#6e5b43" stroke-width="6" stroke-linejoin="round"/>
<polygon points="170,250 200,222 300,218 330,260 335,330 310,420 230,440 175,430 160,350" fill="url(#shade)"/>
<polygon points="181,169 328,159 323,189 293,224 203,231 181,204" fill="#3a2e23" stroke="#3a2e23" stroke-width="7" stroke-linejoin="round"/>
<polygon points="178,160 325,150 320,180 290,215 200,222 178,195" fill="#75624a" stroke="#75624a" stroke-width="6" stroke-linejoin="round"/>
<polygon points="178,160 325,150 320,180 290,215 200,222 178,195" fill="url(#shade)"/>
<polygon points="163,119 188,99 303,101 323,124 313,149 203,164 168,144" fill="#3a2e23" stroke="#3a2e23" stroke-width="7" stroke-linejoin="round"/>
<polygon points="160,110 185,90 300,92 320,115 310,140 200,155 165,135" fill="#8b775e" stroke="#8b775e" stroke-width="6" stroke-linejoin="round"/>
<polygon points="160,110 185,90 300,92 320,115 310,140 200,155 165,135" fill="url(#shade)"/>
<polygon points="403,249 443,234 523,254 503,339 403,334" fill="#3a2e23" stroke="#3a2e23" stroke-width="7" stroke-linejoin="round"/>
<polygon points="400,240 440,225 520,245 500,330 400,325" fill="#64503c" stroke="#64503c" stroke-width="6" stroke-linejoin="round"/>
<polygon points="400,240 440,225 520,245 500,330 400,325" fill="url(#shade)"/>
<polygon points="433,184 473,169 563,179 568,224 523,249 443,244" fill="#3a2e23" stroke="#3a2e23" stroke-width="7" stroke-linejoin="round"/>
<polygon points="430,175 470,160 560,170 565,215 520,240 440,235" fill="#544334" stroke="#544334" stroke-width="6" stroke-linejoin="round"/>
<polygon points="430,175 470,160 560,170 565,215 520,240 440,235" fill="url(#shade)"/>
<polygon points="448,129 563,124 568,159 543,174 458,169" fill="#3a2e23" stroke="#3a2e23" stroke-width="7" stroke-linejoin="round"/>
<polygon points="445,120 560,115 565,150 540,165 455,160" fill="#685543" stroke="#685543" stroke-width="6" stroke-linejoin="round"/>
<polygon points="445,120 560,115 565,150 540,165 455,160" fill="url(#shade)"/>
<polygon points="468,104 493,89 558,94 568,114 548,129 478,129" fill="#3a2e23" stroke="#3a2e23" stroke-width="7" stroke-linejoin="round"/>
<polygon points="465,95 490,80 555,85 565,105 545,120 475,120" fill="#806d58" stroke="#806d58" stroke-width="6" stroke-linejoin="round"/>
<polygon points="465,95 490,80 555,85 565,105 545,120 475,120" fill="url(#shade)"/>
<polygon points="473,264 533,259 558,319 548,374 453,379 443,319" fill="#3a2e23" stroke="#3a2e23" stroke-width="7" stroke-linejoin="round"/>
<polygon points="470,255 530,250 555,310 545,365 450,370 440,310" fill="#947757" stroke="#947757" stroke-width="6" stroke-linejoin="round"/>
<polygon points="470,255 530,250 555,310 545,365 450,370 440,310" fill="url(#shade)"/>
<polygon points="553,139 593,134 603,199 563,209" fill="#3a2e23" stroke="#3a2e23" stroke-width="7" stroke-linejoin="round"/>
<polygon points="550,130 590,125 600,190 560,200" fill="#92664a" stroke="#92664a" stroke-width="6" stroke-linejoin="round"/>
<polygon points="550,130 590,125 600,190 560,200" fill="url(#shade)"/>
<polygon points="573,224 643,209 753,204 763,259 703,299 593,299 568,269" fill="#3a2e23" stroke="#3a2e23" stroke-width="7" stroke-linejoin="round"/>
<polygon points="570,215 640,200 750,195 760,250 700,290 590,290 565,260" fill="#5e4d3c" stroke="#5e4d3c" stroke-width="6" stroke-linejoin="round"/>
<polygon points="570,215 640,200 750,195 760,250 700,290 590,290 565,260" fill="url(#shade)"/>
<polygon points="593,129 643,94 743,104 763,159 703,194 623,204 593,169" fill="#3a2e23" stroke="#3a2e23" stroke-width="7" stroke-linejoin="round"/>
<polygon points="590,120 640,85 740,95 760,150 700,185 620,195 590,160" fill="#90785e" stroke="#90785e" stroke-width="6" stroke-linejoin="round"/>
<polygon points="590,120 640,85 740,95 760,150 700,185 620,195 590,160" fill="url(#shade)"/>
<polygon points="563,304 703,299 753,309 748,359 603,369 563,349" fill="#3a2e23" stroke="#3a2e23" stroke-width="7" stroke-linejoin="round"/>
<polygon points="560,295 700,290 750,300 745,350 600,360 560,340" fill="#725c46" stroke="#725c46" stroke-width="6" stroke-linejoin="round"/>
<polygon points="560,295 700,290 750,300 745,350 600,360 560,340" fill="url(#shade)"/>
<polygon points="773,209 839,199 839,339 793,339 763,289" fill="#3a2e23" stroke="#3a2e23" stroke-width="7" stroke-linejoin="round"/>
<polygon points="770,200 836,190 836,330 790,330 760,280" fill="#806a51" stroke="#806a51" stroke-width="6" stroke-linejoin="round"/>
<polygon points="770,200 836,190 836,330 790,330 760,280" fill="url(#shade)"/>
<polygon points="748,169 803,174 839,194 839,209 763,209" fill="#3a2e23" stroke="#3a2e23" stroke-width="7" stroke-linejoin="round"/>
<polygon points="745,160 800,165 836,185 836,200 760,200" fill="#927352" stroke="#927352" stroke-width="6" stroke-linejoin="round"/>
<polygon points="745,160 800,165 836,185 836,200 760,200" fill="url(#shade)"/>
<polygon points="343,259 393,249 403,339 353,349" fill="#3a2e23" stroke="#3a2e23" stroke-width="7" stroke-linejoin="round"/>
<polygon points="340,250 390,240 400,330 350,340" fill="#6c5743" stroke="#6c5743" stroke-width="6" stroke-linejoin="round"/>
<polygon points="340,250 390,240 400,330 350,340" fill="url(#shade)"/>
<polygon points="293,369 333,354 358,374 343,429 303,424" fill="#3a2e23" stroke="#3a2e23" stroke-width="7" stroke-linejoin="round"/>
<polygon points="290,360 330,345 355,365 340,420 300,415" fill="#705b46" stroke="#705b46" stroke-width="6" stroke-linejoin="round"/>
<polygon points="290,360 330,345 355,365 340,420 300,415" fill="url(#shade)"/>
<polygon points="533,389 603,369 723,369 738,409 693,479 563,489 538,449" fill="#3a2e23" stroke="#3a2e23" stroke-width="7" stroke-linejoin="round"/>
<polygon points="530,380 600,360 720,360 735,400 690,470 560,480 535,440" fill="#6f5b45" stroke="#6f5b45" stroke-width="6" stroke-linejoin="round"/>
<polygon points="530,380 600,360 720,360 735,400 690,470 560,480 535,440" fill="url(#shade)"/>
<polygon points="318,409 373,371 523,384 543,419 523,479 423,504 343,459" fill="#3a2e23" stroke="#3a2e23" stroke-width="7" stroke-linejoin="round"/>
<polygon points="315,400 370,362 520,375 540,410 520,470 420,495 340,450" fill="#988064" stroke="#988064" stroke-width="6" stroke-linejoin="round"/>
<polygon points="315,400 370,362 520,375 540,410 520,470 420,495 340,450" fill="url(#shade)"/>
<polygon points="703,409 763,379 818,399 828,459 793,509 723,519 698,469" fill="#3a2e23" stroke="#3a2e23" stroke-width="7" stroke-linejoin="round"/>
<polygon points="700,400 760,370 815,390 825,450 790,500 720,510 695,460" fill="#8e775d" stroke="#8e775d" stroke-width="6" stroke-linejoin="round"/>
<polygon points="700,400 760,370 815,390 825,450 790,500 720,510 695,460" fill="url(#shade)"/>
<polygon points="228,529 273,474 343,459 393,499 383,569 243,574" fill="#3a2e23" stroke="#3a2e23" stroke-width="7" stroke-linejoin="round"/>
<polygon points="225,520 270,465 340,450 390,490 380,560 240,565" fill="#826d53" stroke="#826d53" stroke-width="6" stroke-linejoin="round"/>
<polygon points="225,520 270,465 340,450 390,490 380,560 240,565" fill="url(#shade)"/>
<polygon points="368,529 423,509 503,489 553,499 548,579 373,579" fill="#3a2e23" stroke="#3a2e23" stroke-width="7" stroke-linejoin="round"/>
<polygon points="365,520 420,500 500,480 550,490 545,570 370,570" fill="#a58663" stroke="#a58663" stroke-width="6" stroke-linejoin="round"/>
<polygon points="365,520 420,500 500,480 550,490 545,570 370,570" fill="url(#shade)"/>
<polygon points="380,525 470,508 480,540 400,560" fill="#b29268" stroke="#b29268" stroke-width="6" stroke-linejoin="round"/>
<polygon points="553,509 603,499 643,539 603,579 558,579" fill="#3a2e23" stroke="#3a2e23" stroke-width="7" stroke-linejoin="round"/>
<polygon points="550,500 600,490 640,530 600,570 555,570" fill="#6d5844" stroke="#6d5844" stroke-width="6" stroke-linejoin="round"/>
<polygon points="550,500 600,490 640,530 600,570 555,570" fill="url(#shade)"/>
<polygon points="723,529 773,514 803,539 793,574 733,574" fill="#3a2e23" stroke="#3a2e23" stroke-width="7" stroke-linejoin="round"/>
<polygon points="720,520 770,505 800,530 790,565 730,565" fill="#846c52" stroke="#846c52" stroke-width="6" stroke-linejoin="round"/>
<polygon points="720,520 770,505 800,530 790,565 730,565" fill="url(#shade)"/>
<polygon points="803,359 839,354 839,449 818,429" fill="#3a2e23" stroke="#3a2e23" stroke-width="7" stroke-linejoin="round"/>
<polygon points="800,350 836,345 836,440 815,420" fill="#6c5743" stroke="#6c5743" stroke-width="6" stroke-linejoin="round"/>
<polygon points="800,350 836,345 836,440 815,420" fill="url(#shade)"/>
<polygon points="803,489 839,479 839,579 793,579" fill="#3a2e23" stroke="#3a2e23" stroke-width="7" stroke-linejoin="round"/>
<polygon points="800,480 836,470 836,570 790,570" fill="#7f6850" stroke="#7f6850" stroke-width="6" stroke-linejoin="round"/>
<polygon points="800,480 836,470 836,570 790,570" fill="url(#shade)"/>
<ellipse cx="376" cy="105" rx="25" ry="10" fill="#6c5a47"/>
<ellipse cx="380" cy="128" rx="40" ry="12" fill="#5e4e3d"/>
<ellipse cx="385" cy="152" rx="40" ry="13" fill="#6c5846"/>
<ellipse cx="378" cy="178" rx="38" ry="17" fill="#5a4a39"/>
<ellipse cx="370" cy="220" rx="40" ry="15" fill="#665341"/>
<ellipse cx="30" cy="470" rx="18" ry="10" fill="#967857"/>
<ellipse cx="70" cy="500" rx="15" ry="9" fill="#997b58"/>
<ellipse cx="120" cy="460" rx="20" ry="10" fill="#967857"/>
<ellipse cx="150" cy="490" rx="14" ry="8" fill="#8c7051"/>
<ellipse cx="40" cy="530" rx="16" ry="9" fill="#967857"/>
<ellipse cx="100" cy="545" rx="18" ry="9" fill="#9f7f5c"/>
<ellipse cx="190" cy="470" rx="18" ry="10" fill="#967857"/>
<ellipse cx="170" cy="540" rx="14" ry="8" fill="#8c7051"/>
<ellipse cx="140" cy="492" rx="25" ry="6" fill="#6f7a3a"/>
<ellipse cx="630" cy="495" rx="14" ry="12" fill="#5f7035"/>
<ellipse cx="60" cy="520" rx="20" ry="7" fill="#6f7a3a"/>
<ellipse cx="130" cy="100" rx="10" ry="8" fill="#6c5846"/>
<ellipse cx="120" cy="80" rx="8" ry="4" fill="#6c5846"/>
<ellipse cx="600" cy="38" rx="5" ry="4" fill="#6c5846"/>
<ellipse cx="790" cy="100" rx="5" ry="4" fill="#6c5846"/>
</g>
<g transform="translate(175.3,175.7) scale(.2105)">
<polygon points="280,440 700,440 700,570 130,570" fill="#8f6b46" stroke="#8f6b46" stroke-width="6" stroke-linejoin="round"/>
<polygon points="3,209 28,219 33,299 3,329" fill="#3a2e23" stroke="#3a2e23" stroke-width="7" stroke-linejoin="round"/>
<polygon points="0,200 25,210 30,290 0,320" fill="#806a52" stroke="#806a52" stroke-width="6" stroke-linejoin="round"/>
<polygon points="0,200 25,210 30,290 0,320" fill="url(#shade)"/>
<polygon points="3,99 28,89 33,139 8,149" fill="#3a2e23" stroke="#3a2e23" stroke-width="7" stroke-linejoin="round"/>
<polygon points="0,90 25,80 30,130 5,140" fill="#6c5846" stroke="#6c5846" stroke-width="6" stroke-linejoin="round"/>
<polygon points="0,90 25,80 30,130 5,140" fill="url(#shade)"/>
<polygon points="118,194 153,209 163,259 128,269" fill="#3a2e23" stroke="#3a2e23" stroke-width="7" stroke-linejoin="round"/>
<polygon points="115,185 150,200 160,250 125,260" fill="#725e48" stroke="#725e48" stroke-width="6" stroke-linejoin="round"/>
<polygon points="115,185 150,200 160,250 125,260" fill="url(#shade)"/>
<polygon points="38,319 113,329 103,354 53,354" fill="#3a2e23" stroke="#3a2e23" stroke-width="7" stroke-linejoin="round"/>
<polygon points="35,310 110,320 100,345 50,345" fill="#544334" stroke="#544334" stroke-width="6" stroke-linejoin="round"/>
<polygon points="35,310 110,320 100,345 50,345" fill="url(#shade)"/>
<polygon points="33,254 123,249 133,299 113,334 53,339 28,309" fill="#3a2e23" stroke="#3a2e23" stroke-width="7" stroke-linejoin="round"/>
<polygon points="30,245 120,240 130,290 110,325 50,330 25,300" fill="#705b45" stroke="#705b45" stroke-width="6" stroke-linejoin="round"/>
<polygon points="30,245 120,240 130,290 110,325 50,330 25,300" fill="url(#shade)"/>
<polygon points="28,214 118,214 128,249 43,254" fill="#3a2e23" stroke="#3a2e23" stroke-width="7" stroke-linejoin="round"/>
<polygon points="25,205 115,205 125,240 40,245" fill="#614e3a" stroke="#614e3a" stroke-width="6" stroke-linejoin="round"/>
<polygon points="25,205 115,205 125,240 40,245" fill="url(#shade)"/>
<polygon points="28,169 103,159 123,184 113,214 43,219 23,199" fill="#3a2e23" stroke="#3a2e23" stroke-width="7" stroke-linejoin="round"/>
<polygon points="25,160 100,150 120,175 110,205 40,210 20,190" fill="#6d5844" stroke="#6d5844" stroke-width="6" stroke-linejoin="round"/>
<polygon points="25,160 100,150 120,175 110,205 40,210 20,190" fill="url(#shade)"/>
<polygon points="48,109 83,94 113,109 118,139 63,149 43,134" fill="#3a2e23" stroke="#3a2e23" stroke-width="7" stroke-linejoin="round"/>
<polygon points="45,100 80,85 110,100 115,130 60,140 40,125" fill="#927c63" stroke="#927c63" stroke-width="6" stroke-linejoin="round"/>
<polygon points="45,100 80,85 110,100 115,130 60,140 40,125" fill="url(#shade)"/>
<polygon points="238,164 293,169 288,189 243,187" fill="#3a2e23" stroke="#3a2e23" stroke-width="7" stroke-linejoin="round"/>
<polygon points="235,155 290,160 285,180 240,178" fill="#524334" stroke="#524334" stroke-width="6" stroke-linejoin="round"/>
<polygon points="235,155 290,160 285,180 240,178" fill="url(#shade)"/>
<polygon points="238,129 303,124 323,144 313,164 253,169 235,154" fill="#3a2e23" stroke="#3a2e23" stroke-width="7" stroke-linejoin="round"/>
<polygon points="235,120 300,115 320,135 310,155 250,160 232,145" fill="#6f5e4c" stroke="#6f5e4c" stroke-width="6" stroke-linejoin="round"/>
<polygon points="235,120 300,115 320,135 310,155 250,160 232,145" fill="url(#shade)"/>
<polygon points="233,94 293,89 298,119 243,127" fill="#3a2e23" stroke="#3a2e23" stroke-width="7" stroke-linejoin="round"/>
<polygon points="230,85 290,80 295,110 240,118" fill="#584839" stroke="#584839" stroke-width="6" stroke-linejoin="round"/>
<polygon points="230,85 290,80 295,110 240,118" fill="url(#shade)"/>
<polygon points="235,59 278,49 288,74 273,89 238,89" fill="#3a2e23" stroke="#3a2e23" stroke-width="7" stroke-linejoin="round"/>
<polygon points="232,50 275,40 285,65 270,80 235,80" fill="#5e4e3e" stroke="#5e4e3e" stroke-width="6" stroke-linejoin="round"/>
<polygon points="232,50 275,40 285,65 270,80 235,80" fill="url(#shade)"/>
<polygon points="338,114 363,109 583,119 603,239 593,329 423,339 333,319 323,229" fill="#3a2e23" stroke="#3a2e23" stroke-width="7" stroke-linejoin="round"/>
<polygon points="335,105 360,100 580,110 600,230 590,320 420,330 330,310 320,220" fill="#64523d" stroke="#64523d" stroke-width="6" stroke-linejoin="round"/>
<polygon points="335,105 360,100 580,110 600,230 590,320 420,330 330,310 320,220" fill="url(#shade)"/>
<polygon points="356,-5 368,-31 398,-53 423,-71 550,-71 568,-53 583,-31 593,-5 593,9 588,119 578,134 363,129 353,9" fill="#3a2e23" stroke="#3a2e23" stroke-width="7" stroke-linejoin="round"/>
<polygon points="353,-14 365,-40 395,-62 420,-80 547,-80 565,-62 580,-40 590,-14 590,0 585,110 575,125 360,120 350,0" fill="#705b42" stroke="#705b42" stroke-width="6" stroke-linejoin="round"/>
<polygon points="353,-14 365,-40 395,-62 420,-80 547,-80 565,-62 580,-40 590,-14 590,0 585,110 575,125 360,120 350,0" fill="url(#shade)"/>
<polygon points="420,-80 547,-80 560,-66 405,-66" fill="#7c664b" stroke="#7c664b" stroke-width="6" stroke-linejoin="round"/>
<polygon points="378,30 380,0 410,-20 438,0 440,30" fill="#3f3224" stroke="#3f3224" stroke-width="6" stroke-linejoin="round"/>
<polygon points="455,30 457,-4 488,-24 518,-4 520,30" fill="#3f3224" stroke="#3f3224" stroke-width="6" stroke-linejoin="round"/>
<polygon points="534,30 536,0 558,-18 578,0 580,30" fill="#3f3224" stroke="#3f3224" stroke-width="6" stroke-linejoin="round"/>
<polygon points="358,33 588,33 588,50 358,50" fill="#74624d" stroke="#74624d" stroke-width="6" stroke-linejoin="round"/>
<polygon points="365,60 480,56 582,66 578,105 370,105" fill="#4a3b2c" stroke="#4a3b2c" stroke-width="6" stroke-linejoin="round"/>
<polygon points="593,159 633,169 638,259 603,279" fill="#3a2e23" stroke="#3a2e23" stroke-width="7" stroke-linejoin="round"/>
<polygon points="590,150 630,160 635,250 600,270" fill="#6c5845" stroke="#6c5845" stroke-width="6" stroke-linejoin="round"/>
<polygon points="590,150 630,160 635,250 600,270" fill="url(#shade)"/>
<polygon points="428,169 473,139 523,149 553,209 503,229 433,209" fill="#3a2e23" stroke="#3a2e23" stroke-width="7" stroke-linejoin="round"/>
<polygon points="425,160 470,130 520,140 550,200 500,220 430,200" fill="#93785a" stroke="#93785a" stroke-width="6" stroke-linejoin="round"/>
<polygon points="425,160 470,130 520,140 550,200 500,220 430,200" fill="url(#shade)"/>
<polygon points="423,249 483,224 543,234 573,279 543,319 473,309 428,284" fill="#3a2e23" stroke="#3a2e23" stroke-width="7" stroke-linejoin="round"/>
<polygon points="420,240 480,215 540,225 570,270 540,310 470,300 425,275" fill="#a98b67" stroke="#a98b67" stroke-width="6" stroke-linejoin="round"/>
<polygon points="420,240 480,215 540,225 570,270 540,310 470,300 425,275" fill="url(#shade)"/>
<polygon points="413,279 463,264 513,284 528,319 483,344 428,329" fill="#3a2e23" stroke="#3a2e23" stroke-width="7" stroke-linejoin="round"/>
<polygon points="410,270 460,255 510,275 525,310 480,335 425,320" fill="#846d54" stroke="#846d54" stroke-width="6" stroke-linejoin="round"/>
<polygon points="410,270 460,255 510,275 525,310 480,335 425,320" fill="url(#shade)"/>
<polygon points="503,339 548,349 553,409 513,419" fill="#3a2e23" stroke="#3a2e23" stroke-width="7" stroke-linejoin="round"/>
<polygon points="500,330 545,340 550,400 510,410" fill="#66533f" stroke="#66533f" stroke-width="6" stroke-linejoin="round"/>
<polygon points="500,330 545,340 550,400 510,410" fill="url(#shade)"/>
<polygon points="393,349 443,327 493,344 503,379 453,404 403,394" fill="#3a2e23" stroke="#3a2e23" stroke-width="7" stroke-linejoin="round"/>
<polygon points="390,340 440,318 490,335 500,370 450,395 400,385" fill="#826b52" stroke="#826b52" stroke-width="6" stroke-linejoin="round"/>
<polygon points="390,340 440,318 490,335 500,370 450,395 400,385" fill="url(#shade)"/>
<polygon points="403,409 473,399 503,429 473,469 428,464" fill="#3a2e23" stroke="#3a2e23" stroke-width="7" stroke-linejoin="round"/>
<polygon points="400,400 470,390 500,420 470,460 425,455" fill="#705d49" stroke="#705d49" stroke-width="6" stroke-linejoin="round"/>
<polygon points="400,400 470,390 500,420 470,460 425,455" fill="url(#shade)"/>
<polygon points="308,329 373,324 398,354 378,389 323,384" fill="#3a2e23" stroke="#3a2e23" stroke-width="7" stroke-linejoin="round"/>
<polygon points="305,320 370,315 395,345 375,380 320,375" fill="#6c5744" stroke="#6c5744" stroke-width="6" stroke-linejoin="round"/>
<polygon points="305,320 370,315 395,345 375,380 320,375" fill="url(#shade)"/>
<polygon points="243,279 293,264 323,284 313,309 258,314" fill="#3a2e23" stroke="#3a2e23" stroke-width="7" stroke-linejoin="round"/>
<polygon points="240,270 290,255 320,275 310,300 255,305" fill="#987c5d" stroke="#987c5d" stroke-width="6" stroke-linejoin="round"/>
<polygon points="240,270 290,255 320,275 310,300 255,305" fill="url(#shade)"/>
<polygon points="163,289 223,284 243,319 183,339" fill="#3a2e23" stroke="#3a2e23" stroke-width="7" stroke-linejoin="round"/>
<polygon points="160,280 220,275 240,310 180,330" fill="#6f5b47" stroke="#6f5b47" stroke-width="6" stroke-linejoin="round"/>
<polygon points="160,280 220,275 240,310 180,330" fill="url(#shade)"/>
<polygon points="183,339 243,319 283,349 273,399 213,409 183,379" fill="#3a2e23" stroke="#3a2e23" stroke-width="7" stroke-linejoin="round"/>
<polygon points="180,330 240,310 280,340 270,390 210,400 180,370" fill="#816b52" stroke="#816b52" stroke-width="6" stroke-linejoin="round"/>
<polygon points="180,330 240,310 280,340 270,390 210,400 180,370" fill="url(#shade)"/>
<polygon points="273,379 323,384 333,419 283,424" fill="#3a2e23" stroke="#3a2e23" stroke-width="7" stroke-linejoin="round"/>
<polygon points="270,370 320,375 330,410 280,415" fill="#7f674f" stroke="#7f674f" stroke-width="6" stroke-linejoin="round"/>
<polygon points="270,370 320,375 330,410 280,415" fill="url(#shade)"/>
<polygon points="3,359 53,349 78,389 53,439 3,459" fill="#3a2e23" stroke="#3a2e23" stroke-width="7" stroke-linejoin="round"/>
<polygon points="0,350 50,340 75,380 50,430 0,450" fill="#856f56" stroke="#856f56" stroke-width="6" stroke-linejoin="round"/>
<polygon points="0,350 50,340 75,380 50,430 0,450" fill="url(#shade)"/>
<polygon points="18,459 63,389 133,349 203,379 238,429 203,509 123,529 43,509" fill="#3a2e23" stroke="#3a2e23" stroke-width="7" stroke-linejoin="round"/>
<polygon points="15,450 60,380 130,340 200,370 235,420 200,500 120,520 40,500" fill="#8e775c" stroke="#8e775c" stroke-width="6" stroke-linejoin="round"/>
<polygon points="15,450 60,380 130,340 200,370 235,420 200,500 120,520 40,500" fill="url(#shade)"/>
<polygon points="193,449 253,429 278,469 253,529 203,534" fill="#3a2e23" stroke="#3a2e23" stroke-width="7" stroke-linejoin="round"/>
<polygon points="190,440 250,420 275,460 250,520 200,525" fill="#78634b" stroke="#78634b" stroke-width="6" stroke-linejoin="round"/>
<polygon points="190,440 250,420 275,460 250,520 200,525" fill="url(#shade)"/>
<polygon points="3,534 53,524 113,554 133,579 3,579" fill="#3a2e23" stroke="#3a2e23" stroke-width="7" stroke-linejoin="round"/>
<polygon points="0,525 50,515 110,545 130,570 0,570" fill="#846e54" stroke="#846e54" stroke-width="6" stroke-linejoin="round"/>
<polygon points="0,525 50,515 110,545 130,570 0,570" fill="url(#shade)"/>
<polygon points="723,139 763,94 823,104 839,119 839,209 793,219 733,179" fill="#3a2e23" stroke="#3a2e23" stroke-width="7" stroke-linejoin="round"/>
<polygon points="720,130 760,85 820,95 836,110 836,200 790,210 730,170" fill="#9d876f" stroke="#9d876f" stroke-width="6" stroke-linejoin="round"/>
<polygon points="720,130 760,85 820,95 836,110 836,200 790,210 730,170" fill="url(#shade)"/>
<polygon points="733,204 803,209 803,244 743,249" fill="#3a2e23" stroke="#3a2e23" stroke-width="7" stroke-linejoin="round"/>
<polygon points="730,195 800,200 800,235 740,240" fill="#927354" stroke="#927354" stroke-width="6" stroke-linejoin="round"/>
<polygon points="730,195 800,200 800,235 740,240" fill="url(#shade)"/>
<polygon points="643,189 703,184 723,239 653,249" fill="#3a2e23" stroke="#3a2e23" stroke-width="7" stroke-linejoin="round"/>
<polygon points="640,180 700,175 720,230 650,240" fill="#7a644b" stroke="#7a644b" stroke-width="6" stroke-linejoin="round"/>
<polygon points="640,180 700,175 720,230 650,240" fill="url(#shade)"/>
<polygon points="643,274 703,249 723,289 693,324 643,314" fill="#3a2e23" stroke="#3a2e23" stroke-width="7" stroke-linejoin="round"/>
<polygon points="640,265 700,240 720,280 690,315 640,305" fill="#725d48" stroke="#725d48" stroke-width="6" stroke-linejoin="round"/>
<polygon points="640,265 700,240 720,280 690,315 640,305" fill="url(#shade)"/>
<polygon points="798,234 839,224 839,299 813,289" fill="#3a2e23" stroke="#3a2e23" stroke-width="7" stroke-linejoin="round"/>
<polygon points="795,225 836,215 836,290 810,280" fill="#7f6851" stroke="#7f6851" stroke-width="6" stroke-linejoin="round"/>
<polygon points="795,225 836,215 836,290 810,280" fill="url(#shade)"/>
<polygon points="693,299 733,249 783,259 839,309 839,429 783,449 703,409 683,349" fill="#3a2e23" stroke="#3a2e23" stroke-width="7" stroke-linejoin="round"/>
<polygon points="690,290 730,240 780,250 836,300 836,420 780,440 700,400 680,340" fill="#997e5f" stroke="#997e5f" stroke-width="6" stroke-linejoin="round"/>
<polygon points="690,290 730,240 780,250 836,300 836,420 780,440 700,400 680,340" fill="url(#shade)"/>
<polygon points="598,319 663,314 683,349 663,369 603,359" fill="#3a2e23" stroke="#3a2e23" stroke-width="7" stroke-linejoin="round"/>
<polygon points="595,310 660,305 680,340 660,360 600,350" fill="#856e55" stroke="#856e55" stroke-width="6" stroke-linejoin="round"/>
<polygon points="595,310 660,305 680,340 660,360 600,350" fill="url(#shade)"/>
<polygon points="573,369 643,364 678,384 673,429 633,454 583,429" fill="#3a2e23" stroke="#3a2e23" stroke-width="7" stroke-linejoin="round"/>
<polygon points="570,360 640,355 675,375 670,420 630,445 580,420" fill="#a58969" stroke="#a58969" stroke-width="6" stroke-linejoin="round"/>
<polygon points="570,360 640,355 675,375 670,420 630,445 580,420" fill="url(#shade)"/>
<polygon points="588,434 643,424 663,459 623,484 593,469" fill="#3a2e23" stroke="#3a2e23" stroke-width="7" stroke-linejoin="round"/>
<polygon points="585,425 640,415 660,450 620,475 590,460" fill="#8c745c" stroke="#8c745c" stroke-width="6" stroke-linejoin="round"/>
<polygon points="585,425 640,415 660,450 620,475 590,460" fill="url(#shade)"/>
<polygon points="683,489 743,479 783,509 763,569 703,559" fill="#3a2e23" stroke="#3a2e23" stroke-width="7" stroke-linejoin="round"/>
<polygon points="680,480 740,470 780,500 760,560 700,550" fill="#6f5b47" stroke="#6f5b47" stroke-width="6" stroke-linejoin="round"/>
<polygon points="680,480 740,470 780,500 760,560 700,550" fill="url(#shade)"/>
<polygon points="733,509 803,449 839,449 839,579 703,579" fill="#3a2e23" stroke="#3a2e23" stroke-width="7" stroke-linejoin="round"/>
<polygon points="730,500 800,440 836,440 836,570 700,570" fill="#92795e" stroke="#92795e" stroke-width="6" stroke-linejoin="round"/>
<polygon points="730,500 800,440 836,440 836,570 700,570" fill="url(#shade)"/>
<ellipse cx="262" cy="25" rx="14" ry="10" fill="#6c5b4a"/>
<ellipse cx="105" cy="100" rx="18" ry="16" fill="#584839"/>
<ellipse cx="15" cy="110" rx="8" ry="20" fill="#665341"/>
<ellipse cx="140" cy="150" rx="12" ry="18" fill="#6c5846"/>
<ellipse cx="660" cy="115" rx="16" ry="22" fill="#6c5847"/>
<ellipse cx="660" cy="95" rx="8" ry="8" fill="#604f3f"/>
<ellipse cx="464" cy="-96" rx="18" ry="11" fill="#7f684e"/>
<ellipse cx="330" cy="500" rx="40" ry="14" fill="#6b7a3a"/>
<ellipse cx="180" cy="540" rx="30" ry="12" fill="#66773a"/>
<ellipse cx="725" cy="425" rx="38" ry="16" fill="#5f7436"/>
<ellipse cx="540" cy="440" rx="20" ry="8" fill="#6b7a3a"/>
<ellipse cx="300" cy="425" rx="20" ry="14" fill="#816b52"/>
<ellipse cx="370" cy="480" rx="22" ry="18" fill="#816b52"/>
<ellipse cx="440" cy="510" rx="18" ry="14" fill="#927555"/>
<ellipse cx="480" cy="525" rx="16" ry="12" fill="#816b52"/>
<ellipse cx="540" cy="530" rx="20" ry="14" fill="#967857"/>
<ellipse cx="600" cy="515" rx="12" ry="9" fill="#816b52"/>
<ellipse cx="410" cy="465" rx="12" ry="10" fill="#816b52"/>
<ellipse cx="290" cy="540" rx="16" ry="10" fill="#8c7051"/>
<ellipse cx="620" cy="545" rx="14" ry="9" fill="#8c7051"/>
<ellipse cx="770" cy="30" rx="5" ry="4" fill="#6c5846"/>
<ellipse cx="635" cy="100" rx="6" ry="5" fill="#6c5846"/>
<ellipse cx="715" cy="95" rx="5" ry="4" fill="#6c5846"/>
</g>
<g transform="translate(351.3,175.7) scale(.2105)">
<polygon points="470,60 560,40 700,40 836,60 836,200 700,190 620,170 480,160" fill="#756043" stroke="#756043" stroke-width="6" stroke-linejoin="round"/>
<polygon points="690,140 800,135 810,185 700,185" fill="#a4924f" stroke="#a4924f" stroke-width="6" stroke-linejoin="round"/>
<polygon points="0,380 330,380 330,460 0,450" fill="#8a6744" stroke="#8a6744" stroke-width="6" stroke-linejoin="round"/>
<polygon points="440,150 700,170 720,260 460,260" fill="#4c3c2c" stroke="#4c3c2c" stroke-width="6" stroke-linejoin="round"/>
<polygon points="103,179 203,159 243,114 333,109 353,159 353,199 123,209" fill="#3a2e23" stroke="#3a2e23" stroke-width="7" stroke-linejoin="round"/>
<polygon points="100,170 200,150 240,105 330,100 350,150 350,190 120,200" fill="#705c48" stroke="#705c48" stroke-width="6" stroke-linejoin="round"/>
<polygon points="100,170 200,150 240,105 330,100 350,150 350,190 120,200" fill="url(#shade)"/>
<polygon points="3,139 63,149 113,174 103,209 43,224 3,214" fill="#3a2e23" stroke="#3a2e23" stroke-width="7" stroke-linejoin="round"/>
<polygon points="0,130 60,140 110,165 100,200 40,215 0,205" fill="#806d58" stroke="#806d58" stroke-width="6" stroke-linejoin="round"/>
<polygon points="0,130 60,140 110,165 100,200 40,215 0,205" fill="url(#shade)"/>
<polygon points="113,214 293,194 263,249 233,264 153,234" fill="#3a2e23" stroke="#3a2e23" stroke-width="7" stroke-linejoin="round"/>
<polygon points="110,205 290,185 260,240 230,255 150,225" fill="#584838" stroke="#584838" stroke-width="6" stroke-linejoin="round"/>
<polygon points="110,205 290,185 260,240 230,255 150,225" fill="url(#shade)"/>
<polygon points="358,104 463,99 478,149 443,174 383,189 361,159" fill="#3a2e23" stroke="#3a2e23" stroke-width="7" stroke-linejoin="round"/>
<polygon points="355,95 460,90 475,140 440,165 380,180 358,150" fill="#5b4b3b" stroke="#5b4b3b" stroke-width="6" stroke-linejoin="round"/>
<polygon points="355,95 460,90 475,140 440,165 380,180 358,150" fill="url(#shade)"/>
<polygon points="368,71 458,69 473,94 383,104" fill="#3a2e23" stroke="#3a2e23" stroke-width="7" stroke-linejoin="round"/>
<polygon points="365,62 455,60 470,85 380,95" fill="#6c5a47" stroke="#6c5a47" stroke-width="6" stroke-linejoin="round"/>
<polygon points="365,62 455,60 470,85 380,95" fill="url(#shade)"/>
<polygon points="353,34 453,29 463,54 443,69 363,67" fill="#3a2e23" stroke="#3a2e23" stroke-width="7" stroke-linejoin="round"/>
<polygon points="350,25 450,20 460,45 440,60 360,58" fill="#75634e" stroke="#75634e" stroke-width="6" stroke-linejoin="round"/>
<polygon points="350,25 450,20 460,45 440,60 360,58" fill="url(#shade)"/>
<polygon points="348,9 443,9 448,27 353,29" fill="#3a2e23" stroke="#3a2e23" stroke-width="7" stroke-linejoin="round"/>
<polygon points="345,0 440,0 445,18 350,20" fill="#6c5a48" stroke="#6c5a48" stroke-width="6" stroke-linejoin="round"/>
<polygon points="345,0 440,0 445,18 350,20" fill="url(#shade)"/>
<polygon points="258,224 333,174 443,189 478,169 503,194 473,259 403,329 333,334 278,289" fill="#3a2e23" stroke="#3a2e23" stroke-width="7" stroke-linejoin="round"/>
<polygon points="255,215 330,165 440,180 475,160 500,185 470,250 400,320 330,325 275,280" fill="#806b54" stroke="#806b54" stroke-width="6" stroke-linejoin="round"/>
<polygon points="255,215 330,165 440,180 475,160 500,185 470,250 400,320 330,325 275,280" fill="url(#shade)"/>
<polygon points="300,190 335,165 440,182 400,200 310,215" fill="#8b7a65" stroke="#8b7a65" stroke-width="6" stroke-linejoin="round"/>
<polygon points="503,169 603,179 673,224 653,254 563,224 513,194" fill="#3a2e23" stroke="#3a2e23" stroke-width="7" stroke-linejoin="round"/>
<polygon points="500,160 600,170 670,215 650,245 560,215 510,185" fill="#b89e7b" stroke="#b89e7b" stroke-width="6" stroke-linejoin="round"/>
<polygon points="500,160 600,170 670,215 650,245 560,215 510,185" fill="url(#shade)"/>
<polygon points="63,239 113,224 203,244 238,279 218,319 173,334 103,309 68,269" fill="#3a2e23" stroke="#3a2e23" stroke-width="7" stroke-linejoin="round"/>
<polygon points="60,230 110,215 200,235 235,270 215,310 170,325 100,300 65,260" fill="#9f876d" stroke="#9f876d" stroke-width="6" stroke-linejoin="round"/>
<polygon points="60,230 110,215 200,235 235,270 215,310 170,325 100,300 65,260" fill="url(#shade)"/>
<polygon points="3,224 63,224 73,269 53,294 3,299" fill="#3a2e23" stroke="#3a2e23" stroke-width="7" stroke-linejoin="round"/>
<polygon points="0,215 60,215 70,260 50,285 0,290" fill="#806b54" stroke="#806b54" stroke-width="6" stroke-linejoin="round"/>
<polygon points="0,215 60,215 70,260 50,285 0,290" fill="url(#shade)"/>
<polygon points="3,304 43,299 53,339 3,344" fill="#3a2e23" stroke="#3a2e23" stroke-width="7" stroke-linejoin="round"/>
<polygon points="0,295 40,290 50,330 0,335" fill="#665341" stroke="#665341" stroke-width="6" stroke-linejoin="round"/>
<polygon points="0,295 40,290 50,330 0,335" fill="url(#shade)"/>
<polygon points="48,319 93,289 173,329 213,359 203,409 143,429 73,399 48,359" fill="#3a2e23" stroke="#3a2e23" stroke-width="7" stroke-linejoin="round"/>
<polygon points="45,310 90,280 170,320 210,350 200,400 140,420 70,390 45,350" fill="#725e4a" stroke="#725e4a" stroke-width="6" stroke-linejoin="round"/>
<polygon points="45,310 90,280 170,320 210,350 200,400 140,420 70,390 45,350" fill="url(#shade)"/>
<polygon points="233,259 293,259 323,319 303,374 243,389 213,349 238,299" fill="#3a2e23" stroke="#3a2e23" stroke-width="7" stroke-linejoin="round"/>
<polygon points="230,250 290,250 320,310 300,365 240,380 210,340 235,290" fill="#6c5846" stroke="#6c5846" stroke-width="6" stroke-linejoin="round"/>
<polygon points="230,250 290,250 320,310 300,365 240,380 210,340 235,290" fill="url(#shade)"/>
<polygon points="3,349 33,354 43,409 13,439 3,434" fill="#3a2e23" stroke="#3a2e23" stroke-width="7" stroke-linejoin="round"/>
<polygon points="0,340 30,345 40,400 10,430 0,425" fill="#92795f" stroke="#92795f" stroke-width="6" stroke-linejoin="round"/>
<polygon points="0,340 30,345 40,400 10,430 0,425" fill="url(#shade)"/>
<polygon points="443,259 543,249 593,299 573,359 503,374 453,329" fill="#3a2e23" stroke="#3a2e23" stroke-width="7" stroke-linejoin="round"/>
<polygon points="440,250 540,240 590,290 570,350 500,365 450,320" fill="#846d55" stroke="#846d55" stroke-width="6" stroke-linejoin="round"/>
<polygon points="440,250 540,240 590,290 570,350 500,365 450,320" fill="url(#shade)"/>
<polygon points="523,199 573,224 603,259 553,269 523,244" fill="#3a2e23" stroke="#3a2e23" stroke-width="7" stroke-linejoin="round"/>
<polygon points="520,190 570,215 600,250 550,260 520,235" fill="#6c5846" stroke="#6c5846" stroke-width="6" stroke-linejoin="round"/>
<polygon points="520,190 570,215 600,250 550,260 520,235" fill="url(#shade)"/>
<polygon points="588,264 643,249 703,279 713,309 603,304" fill="#3a2e23" stroke="#3a2e23" stroke-width="7" stroke-linejoin="round"/>
<polygon points="585,255 640,240 700,270 710,300 600,295" fill="#937c63" stroke="#937c63" stroke-width="6" stroke-linejoin="round"/>
<polygon points="585,255 640,240 700,270 710,300 600,295" fill="url(#shade)"/>
<polygon points="663,224 723,199 793,239 813,279 783,319 723,299 673,259" fill="#3a2e23" stroke="#3a2e23" stroke-width="7" stroke-linejoin="round"/>
<polygon points="660,215 720,190 790,230 810,270 780,310 720,290 670,250" fill="#927b5f" stroke="#927b5f" stroke-width="6" stroke-linejoin="round"/>
<polygon points="660,215 720,190 790,230 810,270 780,310 720,290 670,250" fill="url(#shade)"/>
<polygon points="773,199 839,179 839,259 793,254" fill="#3a2e23" stroke="#3a2e23" stroke-width="7" stroke-linejoin="round"/>
<polygon points="770,190 836,170 836,250 790,245" fill="#6c5745" stroke="#6c5745" stroke-width="6" stroke-linejoin="round"/>
<polygon points="770,190 836,170 836,250 790,245" fill="url(#shade)"/>
<polygon points="578,309 703,314 733,334 703,354 583,349" fill="#3a2e23" stroke="#3a2e23" stroke-width="7" stroke-linejoin="round"/>
<polygon points="575,300 700,305 730,325 700,345 580,340" fill="#7f6850" stroke="#7f6850" stroke-width="6" stroke-linejoin="round"/>
<polygon points="575,300 700,305 730,325 700,345 580,340" fill="url(#shade)"/>
<polygon points="593,349 743,344 783,409 773,479 693,459 603,429" fill="#3a2e23" stroke="#3a2e23" stroke-width="7" stroke-linejoin="round"/>
<polygon points="590,340 740,335 780,400 770,470 690,450 600,420" fill="#7a644d" stroke="#7a644d" stroke-width="6" stroke-linejoin="round"/>
<polygon points="590,340 740,335 780,400 770,470 690,450 600,420" fill="url(#shade)"/>
<polygon points="793,319 839,309 839,449 803,439 783,369" fill="#3a2e23" stroke="#3a2e23" stroke-width="7" stroke-linejoin="round"/>
<polygon points="790,310 836,300 836,440 800,430 780,360" fill="#705c48" stroke="#705c48" stroke-width="6" stroke-linejoin="round"/>
<polygon points="790,310 836,300 836,440 800,430 780,360" fill="url(#shade)"/>
<polygon points="403,339 463,334 483,389 423,404" fill="#3a2e23" stroke="#3a2e23" stroke-width="7" stroke-linejoin="round"/>
<polygon points="400,330 460,325 480,380 420,395" fill="#806a52" stroke="#806a52" stroke-width="6" stroke-linejoin="round"/>
<polygon points="400,330 460,325 480,380 420,395" fill="url(#shade)"/>
<polygon points="323,374 383,349 433,369 428,419 343,424" fill="#3a2e23" stroke="#3a2e23" stroke-width="7" stroke-linejoin="round"/>
<polygon points="320,365 380,340 430,360 425,410 340,415" fill="#967e65" stroke="#967e65" stroke-width="6" stroke-linejoin="round"/>
<polygon points="320,365 380,340 430,360 425,410 340,415" fill="url(#shade)"/>
<polygon points="323,419 403,409 423,439 403,459 333,454" fill="#3a2e23" stroke="#3a2e23" stroke-width="7" stroke-linejoin="round"/>
<polygon points="320,410 400,400 420,430 400,450 330,445" fill="#8c755c" stroke="#8c755c" stroke-width="6" stroke-linejoin="round"/>
<polygon points="320,410 400,400 420,430 400,450 330,445" fill="url(#shade)"/>
<polygon points="308,449 403,439 418,489 383,509 313,499" fill="#3a2e23" stroke="#3a2e23" stroke-width="7" stroke-linejoin="round"/>
<polygon points="305,440 400,430 415,480 380,500 310,490" fill="#937b61" stroke="#937b61" stroke-width="6" stroke-linejoin="round"/>
<polygon points="305,440 400,430 415,480 380,500 310,490" fill="url(#shade)"/>
<polygon points="313,509 393,504 403,569 323,574" fill="#3a2e23" stroke="#3a2e23" stroke-width="7" stroke-linejoin="round"/>
<polygon points="310,500 390,495 400,560 320,565" fill="#725e4a" stroke="#725e4a" stroke-width="6" stroke-linejoin="round"/>
<polygon points="310,500 390,495 400,560 320,565" fill="url(#shade)"/>
<polygon points="403,489 453,484 503,549 483,579 393,579" fill="#3a2e23" stroke="#3a2e23" stroke-width="7" stroke-linejoin="round"/>
<polygon points="400,480 450,475 500,540 480,570 390,570" fill="#92795e" stroke="#92795e" stroke-width="6" stroke-linejoin="round"/>
<polygon points="400,480 450,475 500,540 480,570 390,570" fill="url(#shade)"/>
<polygon points="413,409 503,409 523,449 473,469 423,454" fill="#3a2e23" stroke="#3a2e23" stroke-width="7" stroke-linejoin="round"/>
<polygon points="410,400 500,400 520,440 470,460 420,445" fill="#997f62" stroke="#997f62" stroke-width="6" stroke-linejoin="round"/>
<polygon points="410,400 500,400 520,440 470,460 420,445" fill="url(#shade)"/>
<polygon points="503,389 573,379 593,429 543,449" fill="#3a2e23" stroke="#3a2e23" stroke-width="7" stroke-linejoin="round"/>
<polygon points="500,380 570,370 590,420 540,440" fill="#6c5846" stroke="#6c5846" stroke-width="6" stroke-linejoin="round"/>
<polygon points="500,380 570,370 590,420 540,440" fill="url(#shade)"/>
<polygon points="563,449 623,419 683,449 783,509 793,569 603,574 578,519" fill="#3a2e23" stroke="#3a2e23" stroke-width="7" stroke-linejoin="round"/>
<polygon points="560,440 620,410 680,440 780,500 790,560 600,565 575,510" fill="#8d765c" stroke="#8d765c" stroke-width="6" stroke-linejoin="round"/>
<polygon points="560,440 620,410 680,440 780,500 790,560 600,565 575,510" fill="url(#shade)"/>
<polygon points="788,459 839,454 839,549 803,549" fill="#3a2e23" stroke="#3a2e23" stroke-width="7" stroke-linejoin="round"/>
<polygon points="785,450 836,445 836,540 800,540" fill="#7f6851" stroke="#7f6851" stroke-width="6" stroke-linejoin="round"/>
<polygon points="785,450 836,445 836,540 800,540" fill="url(#shade)"/>
<polygon points="3,459 33,479 103,559 93,579 3,579" fill="#3a2e23" stroke="#3a2e23" stroke-width="7" stroke-linejoin="round"/>
<polygon points="0,450 30,470 100,550 90,570 0,570" fill="#a58c6f" stroke="#a58c6f" stroke-width="6" stroke-linejoin="round"/>
<polygon points="0,450 30,470 100,550 90,570 0,570" fill="url(#shade)"/>
<polygon points="53,469 123,459 158,499 143,549 83,549" fill="#3a2e23" stroke="#3a2e23" stroke-width="7" stroke-linejoin="round"/>
<polygon points="50,460 120,450 155,490 140,540 80,540" fill="#846d54" stroke="#846d54" stroke-width="6" stroke-linejoin="round"/>
<polygon points="50,460 120,450 155,490 140,540 80,540" fill="url(#shade)"/>
<polygon points="173,449 263,429 303,469 283,529 203,539 178,499" fill="#3a2e23" stroke="#3a2e23" stroke-width="7" stroke-linejoin="round"/>
<polygon points="170,440 260,420 300,460 280,520 200,530 175,490" fill="#8c755c" stroke="#8c755c" stroke-width="6" stroke-linejoin="round"/>
<polygon points="170,440 260,420 300,460 280,520 200,530 175,490" fill="url(#shade)"/>
<polygon points="168,549 233,544 248,579 173,579" fill="#3a2e23" stroke="#3a2e23" stroke-width="7" stroke-linejoin="round"/>
<polygon points="165,540 230,535 245,570 170,570" fill="#7a654e" stroke="#7a654e" stroke-width="6" stroke-linejoin="round"/>
<polygon points="165,540 230,535 245,570 170,570" fill="url(#shade)"/>
<polygon points="233,529 273,524 273,569 238,569" fill="#3a2e23" stroke="#3a2e23" stroke-width="7" stroke-linejoin="round"/>
<polygon points="230,520 270,515 270,560 235,560" fill="#725e4a" stroke="#725e4a" stroke-width="6" stroke-linejoin="round"/>
<polygon points="230,520 270,515 270,560 235,560" fill="url(#shade)"/>
<ellipse cx="18" cy="78" rx="12" ry="14" fill="#6c5847"/>
<ellipse cx="62" cy="82" rx="10" ry="12" fill="#6c5847"/>
<ellipse cx="78" cy="128" rx="16" ry="20" fill="#6c5847"/>
<ellipse cx="145" cy="78" rx="12" ry="18" fill="#6c5847"/>
<ellipse cx="140" cy="100" rx="22" ry="10" fill="#6c5847"/>
<ellipse cx="238" cy="130" rx="22" ry="28" fill="#7f664e"/>
<ellipse cx="40" cy="88" rx="12" ry="8" fill="#6c5847"/>
<ellipse cx="580" cy="60" rx="30" ry="10" fill="#604f3f"/>
<ellipse cx="585" cy="80" rx="40" ry="14" fill="#604f3f"/>
<ellipse cx="585" cy="105" rx="38" ry="14" fill="#584839"/>
<ellipse cx="585" cy="130" rx="40" ry="16" fill="#604f3f"/>
<ellipse cx="580" cy="155" rx="38" ry="14" fill="#584839"/>
<ellipse cx="530" cy="80" rx="25" ry="18" fill="#645444"/>
<ellipse cx="525" cy="110" rx="28" ry="16" fill="#645444"/>
<ellipse cx="685" cy="130" rx="20" ry="14" fill="#645444"/>
<ellipse cx="685" cy="150" rx="24" ry="16" fill="#584839"/>
<ellipse cx="680" cy="170" rx="26" ry="14" fill="#645444"/>
<ellipse cx="655" cy="12" rx="12" ry="14" fill="#645444"/>
<ellipse cx="760" cy="25" rx="12" ry="22" fill="#645444"/>
<ellipse cx="740" cy="50" rx="20" ry="10" fill="#645444"/>
<ellipse cx="620" cy="35" rx="12" ry="10" fill="#645444"/>
<ellipse cx="680" cy="30" rx="14" ry="10" fill="#645444"/>
<ellipse cx="820" cy="35" rx="8" ry="12" fill="#645444"/>
<ellipse cx="480" cy="120" rx="20" ry="25" fill="#5e4e3e"/>
<ellipse cx="640" cy="100" rx="18" ry="20" fill="#645444"/>
<ellipse cx="750" cy="110" rx="25" ry="18" fill="#6c5846"/>
<ellipse cx="800" cy="110" rx="20" ry="20" fill="#645444"/>
<ellipse cx="540" cy="510" rx="18" ry="20" fill="#667a38"/>
<ellipse cx="20" cy="438" rx="20" ry="8" fill="#6b7a3a"/>
<ellipse cx="250" cy="400" rx="20" ry="10" fill="#6b7a3a"/>
</g>
</g>
</g>
<rect x=".5" y=".5" width="525" height="294.4" fill="none" stroke="#9aa" stroke-opacity=".25"/>
</svg>
<div class="a stk" style="left:558.4px"></div>
<div class="a stk" style="left:593.4px"></div>
<div class="a stk" style="left:628.4px"></div>
<div class="a stk" style="left:663.4px"></div>
<div class="a stk" style="left:698.4px"></div>
<div class="a stk" style="left:733.4px"></div>
<div class="a stk" style="left:768.4px"></div>
<svg style="left:562.8px;top:463.3px" width="20" height="20" viewBox="0 0 20 20"><polygon points="10.00,3.00 12.29,7.44 17.23,8.25 13.71,11.81 14.47,16.75 10.00,14.50 5.53,16.75 6.29,11.81 2.77,8.25 7.71,7.44" fill="#fdd33c" stroke="#fdd33c" stroke-width="3.4" stroke-linejoin="round"/></svg>
<svg style="left:597.8px;top:463.3px" width="20" height="20" viewBox="0 0 20 20"><circle cx="10" cy="10" r="9.2" fill="#fbad2c"/><ellipse cx="4.6" cy="11.2" rx="2" ry="1.5" fill="#f7775a"/><ellipse cx="15.4" cy="11.2" rx="2" ry="1.5" fill="#f7775a"/><path d="M4.6 8.4Q6.3 6 8 8.4M12 8.4Q13.7 6 15.4 8.4" fill="none" stroke="#4a2410" stroke-width="1.3" stroke-linecap="round"/><path d="M5.8 11.6Q10 16.4 14.2 11.6" fill="none" stroke="#4a2410" stroke-width="1.4" stroke-linecap="round"/></svg>
<svg style="left:632.5px;top:463.0px" width="20" height="20" viewBox="0 0 20 20"><path d="M4.2 9.2C6.6 8.6 8 6.2 8.6 2.6C8.8 1.2 11.2 1.2 11.4 3.6C11.5 5.4 11 6.8 10.6 8H14.8C16.6 8 16.8 10.4 15.4 10.8C16.6 11.4 16.4 13.4 15 13.6C15.8 14.4 15.4 16 14.2 16.2C14.6 17.2 14 18.4 12.6 18.4H7.6C6 18.4 4.8 17.6 4.2 16.6Z" fill="#f7b92e"/><path d="M11 10.9H15.2M10.8 13.6H14.8M10.8 16.2H14" stroke="#d98a16" stroke-width="1" fill="none" stroke-linecap="round"/><path d="M10.6 8.4V18" stroke="#d98a16" stroke-width=".9" fill="none"/></svg>
<svg style="left:668.1px;top:463.4px" width="20" height="20" viewBox="0 0 20 20"><g transform="translate(20,20) rotate(180) translate(20,0) scale(-1,1)"><path d="M4.2 9.2C6.6 8.6 8 6.2 8.6 2.6C8.8 1.2 11.2 1.2 11.4 3.6C11.5 5.4 11 6.8 10.6 8H14.8C16.6 8 16.8 10.4 15.4 10.8C16.6 11.4 16.4 13.4 15 13.6C15.8 14.4 15.4 16 14.2 16.2C14.6 17.2 14 18.4 12.6 18.4H7.6C6 18.4 4.8 17.6 4.2 16.6Z" fill="#f7b92e"/><path d="M11 10.9H15.2M10.8 13.6H14.8M10.8 16.2H14" stroke="#d98a16" stroke-width="1" fill="none" stroke-linecap="round"/><path d="M10.6 8.4V18" stroke="#d98a16" stroke-width=".9" fill="none"/></g></svg>
<svg style="left:702.8px;top:463.3px" width="20" height="20" viewBox="0 0 20 20"><circle cx="17.20" cy="10.00" r="2.3" fill="#f58a1f"/><circle cx="16.24" cy="13.60" r="2.3" fill="#f58a1f"/><circle cx="13.60" cy="16.24" r="2.3" fill="#f58a1f"/><circle cx="10.00" cy="17.20" r="2.3" fill="#f58a1f"/><circle cx="6.40" cy="16.24" r="2.3" fill="#f58a1f"/><circle cx="3.76" cy="13.60" r="2.3" fill="#f58a1f"/><circle cx="2.80" cy="10.00" r="2.3" fill="#f58a1f"/><circle cx="3.76" cy="6.40" r="2.3" fill="#f58a1f"/><circle cx="6.40" cy="3.76" r="2.3" fill="#f58a1f"/><circle cx="10.00" cy="2.80" r="2.3" fill="#f58a1f"/><circle cx="13.60" cy="3.76" r="2.3" fill="#f58a1f"/><circle cx="16.24" cy="6.40" r="2.3" fill="#f58a1f"/><circle cx="10" cy="10" r="7.6" fill="#f58a1f"/><circle cx="10" cy="10" r="6.5" fill="#fcc838"/></svg>
<svg style="left:738.4px;top:462.7px" width="20" height="20" viewBox="0 0 20 20"><path d="M2.56 9.70L1.35 10.40" stroke="#111" stroke-width="1.2" stroke-linecap="round"/><path d="M2.06 6.87L0.69 6.63" stroke="#111" stroke-width="1.2" stroke-linecap="round"/><path d="M3.50 4.38L2.60 3.31" stroke="#111" stroke-width="1.2" stroke-linecap="round"/><path d="M6.20 3.40L6.20 2.00" stroke="#111" stroke-width="1.2" stroke-linecap="round"/><path d="M8.90 4.38L9.80 3.31" stroke="#111" stroke-width="1.2" stroke-linecap="round"/><path d="M10.34 6.87L11.71 6.63" stroke="#111" stroke-width="1.2" stroke-linecap="round"/><circle cx="6.4" cy="7.8" r="2.9" fill="#111"/><path d="M6 16.4A3.1 3.1 0 0 1 5.6 10.3A4.3 4.3 0 0 1 13.6 9.2A3.7 3.7 0 0 1 15.4 16.4Z" fill="#111" stroke="#fff" stroke-width=".7"/></svg>
<svg style="left:772.4px;top:463.1px" width="20" height="20" viewBox="0 0 20 20"><path d="M5 13.4A3.2 3.2 0 0 1 5.2 7A4.2 4.2 0 0 1 12.6 6.6A3.5 3.5 0 0 1 17.6 9.8C18.6 10.6 18.4 13.4 16 13.4Z" fill="none" stroke="#111" stroke-width="1.1"/><path d="M7.8 12A2.3 2.3 0 1 1 7.4 8M7 10.4H17.4" fill="none" stroke="#111" stroke-width="1"/></svg>
<div class="a" style="left:606px;top:494px;width:151px;height:32px;border:2px solid #f00d10"></div>
<div class="a" style="left:638px;top:502px;width:80px;height:20px;border:1px solid #eee;border-radius:10px"></div>
<span class="t" style="left:661.0px;top:505.5px;font-size:8.3px;line-height:12px;color:#444;transform:scaleX(1.001);">Select image</span>
<svg style="left:644px;top:505px" width="12" height="13" viewBox="0 0 12 13"><path d="M2 1.2H7.5L10.3 4V10.8A1 1 0 0 1 9.3 11.8H2A1 1 0 0 1 1 10.8V2.2A1 1 0 0 1 2 1.2Z" fill="none" stroke="#333" stroke-width="1"/><path d="M2.5 10.5L5 7L6.5 8.8L8 6.8" fill="none" stroke="#333" stroke-width="1"/><circle cx="4.3" cy="4.6" r="0.9" fill="#333"/></svg>
<svg style="left:1218.5px;top:505.8px" width="46" height="46" viewBox="0 0 46 46"><path d="M23 0C39 0 46 7 46 23C46 39 39 46 23 46C7 46 0 39 0 23C0 7 7 0 23 0Z" fill="#0a5cc8"/><path d="M20.5 15.6H25.5Q31.6 15.6 31.6 21.4Q31.6 26.4 28.4 27.4L28.9 31.6L24.6 28.2H20.5Q14 28.2 14 21.9Q14 15.6 20.5 15.6Z" fill="none" stroke="#ddd6cc" stroke-width="1.5" stroke-linejoin="round"/></svg>
</body></html>
